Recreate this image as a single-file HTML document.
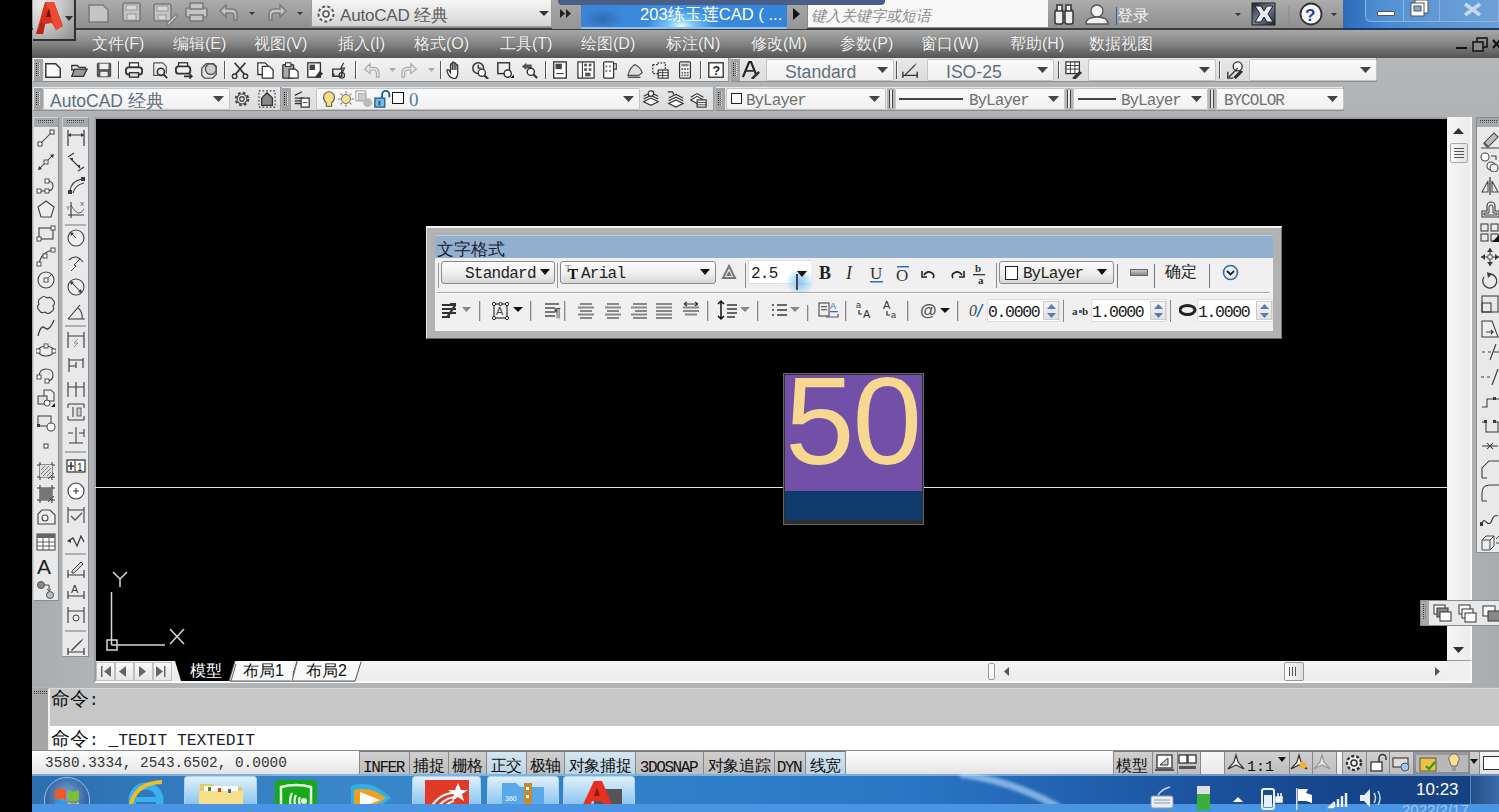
<!DOCTYPE html>
<html><head><meta charset="utf-8">
<style>
*{margin:0;padding:0;box-sizing:border-box}
html,body{width:1499px;height:812px;overflow:hidden;background:#000;font-family:"Liberation Sans",sans-serif;position:relative}
.a{position:absolute}
svg{display:block}
.mono{font-family:"Liberation Mono",monospace}
</style></head><body>
<div class="a" style="left:32px;top:0;width:1467px;height:812px;background:#b0b4b7"></div>
<!-- TITLE BAR -->
<div class="a" style="left:32px;top:0;width:1467px;height:30px;background:linear-gradient(#acacac,#979797 70%,#8e8e8e);border-bottom:2px solid #3c3c3c"></div>
<!-- A logo -->
<div class="a" style="left:33px;top:0;width:43px;height:41px;background:radial-gradient(ellipse at 20% 10%,#e8e8e8 0%,#c8c8c8 45%,#8e8e8e 100%);border-right:2px solid #303030;border-bottom:2px solid #303030;z-index:3">
<svg width="43" height="41" style="position:absolute;left:0;top:0">
<polygon points="3,34 12,2 21,2 30,26 23,30 19,23 12,24 10,34" fill="#d8301e"/><polygon points="12,2 21,2 30,26 23,30" fill="#ee4a32"/><polygon points="3,34 10,34 12,24 8,22" fill="#b82414"/><polygon points="13,17 16,8 18,17" fill="#6a140c"/>
<polygon points="32,16 40,16 36,21" fill="#333"/>
</svg></div>
<!-- quick access -->
<svg class="a" style="left:80px;top:0" width="230" height="29">
<g fill="#c4c4c4" stroke="#7c7c7c" stroke-width="1.6">
<path d="M9,5 h14 l5,5 v12 h-19 z"/>
<rect x="43" y="3" width="17" height="18" rx="2"/>
<rect x="74" y="4" width="17" height="17" rx="2"/>
<rect x="106" y="8" width="21" height="9" rx="2"/>
<rect x="110" y="3" width="13" height="6"/>
<rect x="110" y="15" width="13" height="6"/>
<path d="M140,11 l6,-6 v4 h6 q5,0 5,6 v5 h-3 v-4 q0,-3 -3,-3 h-5 v4 z"/>
<path d="M206,11 l-6,-6 v4 h-6 q-5,0 -5,6 v5 h3 v-4 q0,-3 3,-3 h5 v4 z"/>
</g>
<g fill="#d6d6d6" stroke="#8a8a8a" stroke-width="0.8"><rect x="46" y="5" width="11" height="5"/><rect x="47" y="14" width="9" height="6"/><rect x="77" y="6" width="11" height="5"/><rect x="78" y="15" width="8" height="5"/></g><path d="M87,23 l9,-9 l2,2 l-9,9 h-2z" fill="#c8c8c8" stroke="#7a7a7a" stroke-width="1.2"/>
<polygon points="169,12 175,12 172,15" fill="#333"/>
<polygon points="217,12 223,12 220,15" fill="#333"/>
</svg>
<!-- workspace combo -->
<div class="a" style="left:311px;top:0;width:241px;height:27px;background:linear-gradient(#f6f6f6,#e6e6e6 50%,#d4d4d4);border:1px solid #9a9a9a;border-top:none"></div>
<svg class="a" style="left:314px;top:2px" width="24" height="24"><circle cx="12" cy="12" r="7.5" fill="#eee" stroke="#555" stroke-width="2" stroke-dasharray="3 2.2"/><circle cx="12" cy="12" r="3" fill="none" stroke="#555" stroke-width="1.6"/></svg>
<div class="a" style="left:340px;top:4px;font-size:17px;color:#5a5a5a;letter-spacing:-0.2px">AutoCAD 经典</div>
<svg class="a" style="left:539px;top:10px" width="12" height="8"><polygon points="0,1 10,1 5,6" fill="#333"/></svg>
<div class="a" style="left:552px;top:0;width:29px;height:29px;background:linear-gradient(#a8a8a8,#959595)"></div>
<svg class="a" style="left:560px;top:9px" width="14" height="10"><polygon points="0,0 5,4.5 0,9" fill="#222"/><polygon points="6,0 11,4.5 6,9" fill="#222"/></svg>
<!-- blue title -->
<div class="a" style="left:581px;top:5px;width:206px;height:24px;background:radial-gradient(ellipse 34px 18px at 100px 21px,rgba(235,252,255,1) 0%,rgba(130,215,255,.75) 40%,transparent 100%),radial-gradient(ellipse 20px 10px at 22px 14px,rgba(40,90,160,.6) 0%,transparent 100%),linear-gradient(90deg,#3a84d4,#3a8ee4 50%,#3484d8)"></div>
<div class="a" style="left:581px;top:27px;width:206px;height:2px;background:#8fc0f0"></div>
<div class="a" style="left:640px;top:5px;font-size:16.6px;line-height:20px;color:#fff;white-space:nowrap">203练玉莲CAD ( ...</div>
<div class="a" style="left:787px;top:0;width:20px;height:29px;background:linear-gradient(#a8a8a8,#959595)"></div>
<svg class="a" style="left:792px;top:8px" width="10" height="12"><polygon points="1,0 8,6 1,12" fill="#111"/></svg>
<!-- search -->
<div class="a" style="left:807px;top:0;width:241px;height:27px;background:#f8f8f8;border-left:1px solid #888"></div>
<div class="a" style="left:811px;top:6px;font-size:15px;line-height:20px;color:#8a8a8a;font-style:italic;white-space:nowrap">键入关键字或短语</div>
<!-- right tools -->
<svg class="a" style="left:1052px;top:2px" width="300" height="26">
<g fill="#f0f0f0" stroke="#333" stroke-width="1.5">
<rect x="3" y="8" width="8" height="14" rx="2"/><rect x="13" y="8" width="8" height="14" rx="2"/>
<rect x="5" y="3" width="5" height="6"/><rect x="14" y="3" width="5" height="6"/>
</g>
<g fill="#f4f4f4" stroke="#555" stroke-width="1.3"><circle cx="45" cy="9" r="6"/><path d="M34,22 q0,-7 11,-7 q11,0 11,7 z"/></g>
<rect x="64" y="5" width="1" height="18" fill="#3a5ab0"/>
<text x="65" y="19" font-size="16" fill="#f4f4f4" font-family="Liberation Sans">登录</text>
<polygon points="183,11 189,11 186,14" fill="#333"/>
<defs><linearGradient id="xg" x1="0" y1="0" x2="1" y2="1"><stop offset="0" stop-color="#1c2230"/><stop offset=".5" stop-color="#7a8090"/><stop offset="1" stop-color="#1c2230"/></linearGradient></defs>
<rect x="200" y="1" width="23" height="22" fill="url(#xg)" stroke="#222" stroke-width="1"/>
<path d="M203,4 l6,0 l3,5 l3,-5 l6,0 l-5,8 l5,8 l-6,0 l-3,-5 l-3,5 l-6,0 l5,-8 z" fill="#e8ecf0" stroke="#1a2030" stroke-width="1"/>
<line x1="237" y1="3" x2="237" y2="24" stroke="#888" stroke-width="1"/>
<circle cx="259" cy="12" r="10.5" fill="#f8f8f8" stroke="#333" stroke-width="1.8"/>
<text x="253" y="18.5" font-size="17" font-weight="bold" fill="#2040a8" font-family="Liberation Sans">?</text>
<polygon points="279,11 285,11 282,14" fill="#333"/>
</svg>
<!-- window buttons -->
<div class="a" style="left:1343px;top:0;width:156px;height:30px;background:linear-gradient(90deg,#2d6cb8,#4a8ad0 30%,#5b94d0 60%,#6a9ed6);border-bottom:2px solid #1a3a6a"></div>
<div class="a" style="left:1365px;top:0;width:134px;height:22px;border:1px solid #8ab4e4;border-top:none;border-radius:0 0 0 6px;background:rgba(120,170,225,.25)"></div>
<div class="a" style="left:1403px;top:0;width:1px;height:21px;background:#8ab4e4"></div>
<div class="a" style="left:1439px;top:0;width:1px;height:21px;background:#8ab4e4"></div>
<div class="a" style="left:1377px;top:11px;width:18px;height:5px;background:#fff;border:1px solid #555;border-radius:1px"></div>
<svg class="a" style="left:1409px;top:0" width="24" height="20"><rect x="6" y="0" width="13" height="13" fill="#fff" stroke="#555"/><rect x="2" y="3" width="13" height="13" fill="#fff" stroke="#555"/><rect x="5" y="6" width="7" height="5" fill="#7aa8d8" stroke="#555"/></svg>
<svg class="a" style="left:1462px;top:2px" width="22" height="16"><path d="M3,2 L18,13 M18,2 L3,13" stroke="#c4d8ee" stroke-width="3.6"/></svg>
<div class="a" style="left:558px;top:0;width:327px;height:5px;background:#4a5e86;border-radius:0 0 4px 4px"></div>
<!-- MENU -->
<div class="a" style="left:32px;top:30px;width:1467px;height:28px;background:linear-gradient(#a8a8a8,#8c8c8c 40%,#545454)"></div>
<div class="a" style="left:92px;top:34px;font-size:16px;line-height:20px;color:#f2f2f2;white-space:nowrap;text-shadow:0 0 1px #555">文件(F)</div>
<div class="a" style="left:173px;top:34px;font-size:16px;line-height:20px;color:#f2f2f2;white-space:nowrap;text-shadow:0 0 1px #555">编辑(E)</div>
<div class="a" style="left:254px;top:34px;font-size:16px;line-height:20px;color:#f2f2f2;white-space:nowrap;text-shadow:0 0 1px #555">视图(V)</div>
<div class="a" style="left:338px;top:34px;font-size:16px;line-height:20px;color:#f2f2f2;white-space:nowrap;text-shadow:0 0 1px #555">插入(I)</div>
<div class="a" style="left:414px;top:34px;font-size:16px;line-height:20px;color:#f2f2f2;white-space:nowrap;text-shadow:0 0 1px #555">格式(O)</div>
<div class="a" style="left:500px;top:34px;font-size:16px;line-height:20px;color:#f2f2f2;white-space:nowrap;text-shadow:0 0 1px #555">工具(T)</div>
<div class="a" style="left:581px;top:34px;font-size:16px;line-height:20px;color:#f2f2f2;white-space:nowrap;text-shadow:0 0 1px #555">绘图(D)</div>
<div class="a" style="left:666px;top:34px;font-size:16px;line-height:20px;color:#f2f2f2;white-space:nowrap;text-shadow:0 0 1px #555">标注(N)</div>
<div class="a" style="left:751px;top:34px;font-size:16px;line-height:20px;color:#f2f2f2;white-space:nowrap;text-shadow:0 0 1px #555">修改(M)</div>
<div class="a" style="left:840px;top:34px;font-size:16px;line-height:20px;color:#f2f2f2;white-space:nowrap;text-shadow:0 0 1px #555">参数(P)</div>
<div class="a" style="left:921px;top:34px;font-size:16px;line-height:20px;color:#f2f2f2;white-space:nowrap;text-shadow:0 0 1px #555">窗口(W)</div>
<div class="a" style="left:1010px;top:34px;font-size:16px;line-height:20px;color:#f2f2f2;white-space:nowrap;text-shadow:0 0 1px #555">帮助(H)</div>
<div class="a" style="left:1089px;top:34px;font-size:16px;line-height:20px;color:#f2f2f2;white-space:nowrap;text-shadow:0 0 1px #555">数据视图</div>
<svg class="a" style="left:1453px;top:36px" width="46" height="18">
<rect x="3" y="11" width="11" height="2" fill="#111"/>
<rect x="24" y="2" width="10" height="9" fill="none" stroke="#111" stroke-width="1.5"/><rect x="20" y="6" width="10" height="9" fill="#8a8a8a" stroke="#111" stroke-width="1.5"/>
<path d="M40,4 l7,8 M47,4 l-7,8" stroke="#111" stroke-width="2"/>
</svg>
<!-- TOOLBARS -->
<div class="a" style="left:32px;top:58px;width:1467px;height:60px;background:linear-gradient(#b3b7ba,#afb3b6)"></div>
<div class="a" style="left:33px;top:58px;width:696px;height:24px;background:linear-gradient(#f2f2f2,#e6e6e6);border-bottom:1px solid #8e8e8e;border-right:1px solid #9a9a9a"></div>
<div class="a" style="left:34px;top:59px;width:9px;height:22px;background:#a2a4a6"></div>
<div class="a" style="left:36px;top:63px;width:1px;height:14px;background:repeating-linear-gradient(#222 0 1px,transparent 1px 2px)"></div>
<div class="a" style="left:38px;top:63px;width:1px;height:14px;background:repeating-linear-gradient(#666 0 1px,transparent 1px 2px)"></div>
<div class="a" style="left:39px;top:63px;width:1px;height:14px;background:repeating-linear-gradient(#eee 0 1px,transparent 1px 2px)"></div>
<div class="a" style="left:731px;top:58px;width:646px;height:24px;background:linear-gradient(#e8e8e8,#dcdcdc);border-bottom:1px solid #8e8e8e;border-right:1px solid #9a9a9a"></div>
<div class="a" style="left:731px;top:59px;width:9px;height:22px;background:#a2a4a6"></div>
<div class="a" style="left:733px;top:63px;width:1px;height:14px;background:repeating-linear-gradient(#222 0 1px,transparent 1px 2px)"></div>
<div class="a" style="left:735px;top:63px;width:1px;height:14px;background:repeating-linear-gradient(#666 0 1px,transparent 1px 2px)"></div>
<div class="a" style="left:736px;top:63px;width:1px;height:14px;background:repeating-linear-gradient(#eee 0 1px,transparent 1px 2px)"></div>
<div class="a" style="left:118px;top:61px;width:2px;height:18px;background:#555;border-right:1px solid #fff"></div>
<div class="a" style="left:224px;top:61px;width:2px;height:18px;background:#555;border-right:1px solid #fff"></div>
<div class="a" style="left:355px;top:61px;width:2px;height:18px;background:#555;border-right:1px solid #fff"></div>
<div class="a" style="left:440px;top:61px;width:2px;height:18px;background:#555;border-right:1px solid #fff"></div>
<div class="a" style="left:545px;top:61px;width:2px;height:18px;background:#555;border-right:1px solid #fff"></div>
<div class="a" style="left:700px;top:61px;width:2px;height:18px;background:#555;border-right:1px solid #fff"></div>
<div class="a" style="left:33px;top:87px;width:248px;height:24px;background:linear-gradient(#e8e8e8,#dcdcdc);border-bottom:1px solid #8e8e8e;border-right:1px solid #9a9a9a"></div>
<div class="a" style="left:34px;top:88px;width:9px;height:22px;background:#a2a4a6"></div>
<div class="a" style="left:36px;top:92px;width:1px;height:14px;background:repeating-linear-gradient(#222 0 1px,transparent 1px 2px)"></div>
<div class="a" style="left:38px;top:92px;width:1px;height:14px;background:repeating-linear-gradient(#666 0 1px,transparent 1px 2px)"></div>
<div class="a" style="left:39px;top:92px;width:1px;height:14px;background:repeating-linear-gradient(#eee 0 1px,transparent 1px 2px)"></div>
<div class="a" style="left:43px;top:88px;width:187px;height:22px;background:linear-gradient(#fafafa,#f0f0f0);border:1px solid #c4c4c4;border-radius:2px"></div>
<div class="a" style="left:50px;top:92px;height:18px;line-height:18px;font-family:'Liberation Sans',sans-serif;font-size:17.5px;color:#5f6f80;white-space:nowrap;">AutoCAD 经典</div>
<svg class="a" style="left:213px;top:96px" width="12" height="7"><polygon points="0,0 11,0 5.5,6" fill="#444"/></svg>
<div class="a" style="left:282px;top:87px;width:432px;height:24px;background:linear-gradient(#e8e8e8,#dcdcdc);border-bottom:1px solid #8e8e8e;border-right:1px solid #9a9a9a"></div>
<div class="a" style="left:282px;top:88px;width:9px;height:22px;background:#a2a4a6"></div>
<div class="a" style="left:284px;top:92px;width:1px;height:14px;background:repeating-linear-gradient(#222 0 1px,transparent 1px 2px)"></div>
<div class="a" style="left:286px;top:92px;width:1px;height:14px;background:repeating-linear-gradient(#666 0 1px,transparent 1px 2px)"></div>
<div class="a" style="left:287px;top:92px;width:1px;height:14px;background:repeating-linear-gradient(#eee 0 1px,transparent 1px 2px)"></div>
<div class="a" style="left:316px;top:88px;width:324px;height:22px;background:linear-gradient(#fafafa,#f0f0f0);border:1px solid #c4c4c4;border-radius:2px"></div>
<svg class="a" style="left:623px;top:96px" width="12" height="7"><polygon points="0,0 11,0 5.5,6" fill="#444"/></svg>
<div class="a" style="left:409px;top:89px;font-size:19px;line-height:22px;color:#5a7aa0;font-family:'Liberation Serif',serif">0</div>
<div class="a" style="left:716px;top:87px;width:628px;height:24px;background:linear-gradient(#e8e8e8,#dcdcdc);border-bottom:1px solid #8e8e8e;border-right:1px solid #9a9a9a"></div>
<div class="a" style="left:716px;top:88px;width:9px;height:22px;background:#a2a4a6"></div>
<div class="a" style="left:718px;top:92px;width:1px;height:14px;background:repeating-linear-gradient(#222 0 1px,transparent 1px 2px)"></div>
<div class="a" style="left:720px;top:92px;width:1px;height:14px;background:repeating-linear-gradient(#666 0 1px,transparent 1px 2px)"></div>
<div class="a" style="left:721px;top:92px;width:1px;height:14px;background:repeating-linear-gradient(#eee 0 1px,transparent 1px 2px)"></div>
<div class="a" style="left:726px;top:88px;width:160px;height:22px;background:linear-gradient(#fafafa,#f0f0f0);border:1px solid #c4c4c4;border-radius:2px"></div>
<div class="a" style="left:731px;top:93px;width:11px;height:11px;border:1.5px solid #222;background:#fff"></div>
<div class="a" style="left:746px;top:92px;height:18px;line-height:18px;font-family:'Liberation Mono',monospace;font-size:16px;color:#707070;white-space:nowrap;letter-spacing:-1.05px">ByLayer</div>
<svg class="a" style="left:869px;top:96px" width="12" height="7"><polygon points="0,0 11,0 5.5,6" fill="#444"/></svg>
<div class="a" style="left:887px;top:88px;width:8px;height:22px;background:#b8b8b8"></div>
<div class="a" style="left:889px;top:90px;width:4px;height:18px;border-left:1px solid #444;border-right:1px solid #444;background:#e8e8e8"></div>
<div class="a" style="left:895px;top:88px;width:170px;height:22px;background:linear-gradient(#fafafa,#f0f0f0);border:1px solid #c4c4c4;border-radius:2px"></div>
<div class="a" style="left:899px;top:98px;width:64px;height:2px;background:#444"></div>
<div class="a" style="left:969px;top:92px;height:18px;line-height:18px;font-family:'Liberation Mono',monospace;font-size:16px;color:#707070;white-space:nowrap;letter-spacing:-1.05px">ByLayer</div>
<svg class="a" style="left:1048px;top:96px" width="12" height="7"><polygon points="0,0 11,0 5.5,6" fill="#444"/></svg>
<div class="a" style="left:1065px;top:88px;width:8px;height:22px;background:#b8b8b8"></div>
<div class="a" style="left:1067px;top:90px;width:4px;height:18px;border-left:1px solid #444;border-right:1px solid #444;background:#e8e8e8"></div>
<div class="a" style="left:1073px;top:88px;width:135px;height:22px;background:linear-gradient(#fafafa,#f0f0f0);border:1px solid #c4c4c4;border-radius:2px"></div>
<div class="a" style="left:1078px;top:98px;width:38px;height:2px;background:#444"></div>
<div class="a" style="left:1121px;top:92px;height:18px;line-height:18px;font-family:'Liberation Mono',monospace;font-size:16px;color:#707070;white-space:nowrap;letter-spacing:-1.05px">ByLayer</div>
<svg class="a" style="left:1191px;top:96px" width="12" height="7"><polygon points="0,0 11,0 5.5,6" fill="#444"/></svg>
<div class="a" style="left:1208px;top:88px;width:8px;height:22px;background:#b8b8b8"></div>
<div class="a" style="left:1210px;top:90px;width:4px;height:18px;border-left:1px solid #444;border-right:1px solid #444;background:#e8e8e8"></div>
<div class="a" style="left:1216px;top:88px;width:128px;height:22px;background:linear-gradient(#fafafa,#f0f0f0);border:1px solid #c4c4c4;border-radius:2px"></div>
<div class="a" style="left:1224px;top:92px;height:18px;line-height:18px;font-family:'Liberation Mono',monospace;font-size:16px;color:#707070;white-space:nowrap;letter-spacing:-1.05px">BYCOLOR</div>
<svg class="a" style="left:1327px;top:96px" width="12" height="7"><polygon points="0,0 11,0 5.5,6" fill="#444"/></svg>
<div class="a" style="left:766px;top:59px;width:128px;height:22px;background:linear-gradient(#fafafa,#f0f0f0);border:1px solid #c4c4c4;border-radius:2px"></div>
<div class="a" style="left:785px;top:63px;height:18px;line-height:18px;font-family:'Liberation Sans',sans-serif;font-size:17.6px;color:#5f6f80;white-space:nowrap;">Standard</div>
<svg class="a" style="left:877px;top:67px" width="12" height="7"><polygon points="0,0 11,0 5.5,6" fill="#444"/></svg>
<div class="a" style="left:896px;top:61px;width:2px;height:18px;background:#555;border-right:1px solid #fff"></div>
<div class="a" style="left:927px;top:59px;width:127px;height:22px;background:linear-gradient(#fafafa,#f0f0f0);border:1px solid #c4c4c4;border-radius:2px"></div>
<div class="a" style="left:946px;top:63px;height:18px;line-height:18px;font-family:'Liberation Sans',sans-serif;font-size:17.6px;color:#5f6f80;white-space:nowrap;">ISO-25</div>
<svg class="a" style="left:1037px;top:67px" width="12" height="7"><polygon points="0,0 11,0 5.5,6" fill="#444"/></svg>
<div class="a" style="left:1058px;top:61px;width:2px;height:18px;background:#555;border-right:1px solid #fff"></div>
<div class="a" style="left:1088px;top:59px;width:128px;height:22px;background:linear-gradient(#fafafa,#f0f0f0);border:1px solid #c4c4c4;border-radius:2px"></div>
<svg class="a" style="left:1199px;top:67px" width="12" height="7"><polygon points="0,0 11,0 5.5,6" fill="#444"/></svg>
<div class="a" style="left:1219px;top:61px;width:2px;height:18px;background:#555;border-right:1px solid #fff"></div>
<div class="a" style="left:1249px;top:59px;width:128px;height:22px;background:linear-gradient(#fafafa,#f0f0f0);border:1px solid #c4c4c4;border-radius:2px"></div>
<svg class="a" style="left:1360px;top:67px" width="12" height="7"><polygon points="0,0 11,0 5.5,6" fill="#444"/></svg>
<svg class="a" style="left:44px;top:61px" width="18" height="18" viewBox="0 0 20.00 20.00"><path d="M2,3 h11 l5,5 v10 h-16 z" stroke="#333" stroke-width="1.6" fill="#fafafa"/></svg>
<svg class="a" style="left:70px;top:61px" width="18" height="18" viewBox="0 0 20.00 20.00"><path d="M2,5 h6 l2,2 h7 v3 h-15 z" stroke="#333" stroke-width="1.4" fill="#eee"/><path d="M2,17 l3,-8 h14 l-4,8 z" stroke="#333" stroke-width="1.4" fill="#999"/></svg>
<svg class="a" style="left:95px;top:61px" width="18" height="18" viewBox="0 0 20.00 20.00"><rect x="2" y="2" width="16" height="16" rx="1.5" fill="#555"/><rect x="5" y="3" width="10" height="6" fill="#f0f0f0"/><rect x="6" y="12" width="8" height="5" fill="#f0f0f0"/></svg>
<svg class="a" style="left:125px;top:61px" width="18" height="18" viewBox="0 0 20.00 20.00"><rect x="5" y="2" width="10" height="5" stroke="#333" stroke-width="1.5" fill="#fff"/><rect x="1" y="7" width="18" height="8" rx="3" stroke="#333" stroke-width="2" fill="#eee"/><rect x="5" y="13" width="10" height="5" stroke="#333" stroke-width="1.5" fill="#ddd"/></svg>
<svg class="a" style="left:151px;top:61px" width="18" height="18" viewBox="0 0 20.00 20.00"><path d="M3,2 h10 l4,4 v8" stroke="#555" stroke-width="1.3" fill="none"/><path d="M3,2 v14 h5" stroke="#555" stroke-width="1.3" fill="none"/><circle cx="11" cy="12" r="4" stroke="#333" stroke-width="1.8" fill="none"/><path d="M14,15 l4,4" stroke="#333" stroke-width="2.2" fill="none"/></svg>
<svg class="a" style="left:175px;top:61px" width="18" height="18" viewBox="0 0 20.00 20.00"><rect x="4" y="2" width="10" height="5" stroke="#333" stroke-width="1.5" fill="#fff"/><rect x="1" y="6" width="16" height="8" rx="3" stroke="#333" stroke-width="2" fill="#eee"/><path d="M10,16 h6 v-3 l4,4 l-4,4 v-3 h-6z" fill="#333"/></svg>
<svg class="a" style="left:200px;top:61px" width="18" height="18" viewBox="0 0 20.00 20.00"><path d="M2,8 l5,-5 h8 l3,3 v9 l-4,4 h-9 l-3,-3 z" stroke="#555" stroke-width="1.5" fill="#e8e8e8"/><circle cx="12" cy="9" r="6" stroke="#555" stroke-width="1.5" fill="#ccc"/></svg>
<svg class="a" style="left:231px;top:61px" width="18" height="18" viewBox="0 0 20.00 20.00"><path d="M4,2 l12,14 M16,2 l-12,14" stroke="#333" stroke-width="1.8" fill="none"/><circle cx="4" cy="17" r="2.5" stroke="#333" stroke-width="1.6" fill="#fff"/><circle cx="16" cy="17" r="2.5" stroke="#333" stroke-width="1.6" fill="#fff"/></svg>
<svg class="a" style="left:256px;top:61px" width="18" height="18" viewBox="0 0 20.00 20.00"><path d="M2,2 h8 l3,3 v10 h-11 z" stroke="#333" stroke-width="1.4" fill="#fff"/><path d="M7,6 h8 l4,4 v9 h-12 z" stroke="#333" stroke-width="1.4" fill="#fff"/></svg>
<svg class="a" style="left:281px;top:61px" width="18" height="18" viewBox="0 0 20.00 20.00"><rect x="2" y="4" width="12" height="15" rx="1" stroke="#333" stroke-width="1.5" fill="#aaa"/><rect x="5" y="2" width="6" height="4" stroke="#333" stroke-width="1.2" fill="#fff"/><path d="M9,9 h7 l3,3 v7 h-10 z" stroke="#333" stroke-width="1.4" fill="#fff"/></svg>
<svg class="a" style="left:306px;top:61px" width="18" height="18" viewBox="0 0 20.00 20.00"><rect x="2" y="2" width="14" height="16" stroke="#333" stroke-width="1.5" fill="#fff"/><rect x="4" y="4" width="6" height="6" fill="#444"/><path d="M10,18 l5,-7 l4,3 l-5,5z" fill="#333"/></svg>
<svg class="a" style="left:331px;top:61px" width="18" height="18" viewBox="0 0 20.00 20.00"><path d="M2,9 h10 v8 h-10 z" stroke="#333" stroke-width="1.6" fill="none"/><circle cx="12" cy="16" r="3" stroke="#333" stroke-width="1.3" fill="none"/><path d="M14,2 l-3,6 h4 l-3,6" stroke="#333" stroke-width="1.3" fill="none"/><path d="M1,15 h3" stroke="#333" stroke-width="2" fill="none"/></svg>
<svg class="a" style="left:362px;top:61px" width="18" height="18" viewBox="0 0 20.00 20.00"><path d="M3,9 l6,-6 v4 h4 q6,0 6,7 v4 h-3 v-4 q0,-4 -3,-4 h-4 v4 z" stroke="#aaa" stroke-width="1.3" fill="#e6e6e6"/></svg>
<svg class="a" style="left:401px;top:61px" width="18" height="18" viewBox="0 0 20.00 20.00"><path d="M17,9 l-6,-6 v4 h-4 q-6,0 -6,7 v4 h3 v-4 q0,-4 3,-4 h4 v4 z" stroke="#aaa" stroke-width="1.3" fill="#e6e6e6"/></svg>
<svg class="a" style="left:446px;top:61px" width="18" height="18" viewBox="0 0 20.00 20.00"><path d="M5,18 q-3,-3 -4,-7 q0,-2 2,-1 l2,3 v-9 q1,-2 2,0 v6 v-8 q1,-2 2,0 v8 v-7 q1,-2 2,0 v7 v-5 q1,-2 2,0 v9 q0,4 -3,6 z" stroke="#333" stroke-width="1.4" fill="#fff"/></svg>
<svg class="a" style="left:471px;top:61px" width="18" height="18" viewBox="0 0 20.00 20.00"><circle cx="8" cy="8" r="6" stroke="#333" stroke-width="1.6" fill="none"/><path d="M8,4 v4 h3" stroke="#333" stroke-width="1.4" fill="none"/><circle cx="12" cy="13" r="4" stroke="#333" stroke-width="1.6" fill="#fff"/><path d="M15,16 l4,4" stroke="#333" stroke-width="2.4" fill="none"/></svg>
<svg class="a" style="left:496px;top:61px" width="18" height="18" viewBox="0 0 20.00 20.00"><rect x="2" y="2" width="13" height="12" stroke="#333" stroke-width="1.6" fill="none"/><circle cx="13" cy="14" r="4" stroke="#333" stroke-width="1.6" fill="#fff"/><path d="M16,19 h4 v-4z" fill="#111"/></svg>
<svg class="a" style="left:520px;top:61px" width="18" height="18" viewBox="0 0 20.00 20.00"><path d="M2,6 l5,-4 v2 h6 v4 h-6 v2z" fill="#555"/><circle cx="12" cy="12" r="4" stroke="#333" stroke-width="1.6" fill="#fff"/><path d="M15,15 l4,4" stroke="#333" stroke-width="2.4" fill="none"/></svg>
<svg class="a" style="left:551px;top:61px" width="18" height="18" viewBox="0 0 20.00 20.00"><rect x="3" y="1" width="14" height="18" stroke="#333" stroke-width="1.5" fill="#fff"/><rect x="5" y="3" width="7" height="6" fill="#444"/><path d="M6,14 h8" stroke="#333" stroke-width="1.2" fill="none"/></svg>
<svg class="a" style="left:577px;top:61px" width="18" height="18" viewBox="0 0 20.00 20.00"><rect x="1" y="1" width="18" height="18" stroke="#333" stroke-width="1.4" fill="#fff"/><path d="M6,1 v18" stroke="#333" stroke-width="1.2" fill="none"/><g fill="#555"><rect x="8" y="3" width="3" height="3"/><rect x="13" y="3" width="3" height="3"/><rect x="8" y="8" width="3" height="3"/><rect x="13" y="8" width="3" height="3"/><rect x="9" y="13" width="6" height="4"/></g></svg>
<svg class="a" style="left:601px;top:61px" width="18" height="18" viewBox="0 0 20.00 20.00"><rect x="3" y="1" width="11" height="18" rx="1" stroke="#333" stroke-width="1.4" fill="#fff"/><path d="M14,3 h3 v6 h-3" stroke="#333" stroke-width="1.2" fill="none"/><g fill="#777"><rect x="5" y="5" width="2" height="2"/><rect x="9" y="5" width="2" height="2"/><rect x="5" y="10" width="2" height="2"/><rect x="9" y="10" width="2" height="2"/></g></svg>
<svg class="a" style="left:626px;top:61px" width="18" height="18" viewBox="0 0 20.00 20.00"><path d="M2,16 q3,-10 8,-12 q6,3 8,9 l-4,3 z" stroke="#555" stroke-width="1.3" fill="#ddd"/><path d="M2,18 h14" stroke="#333" stroke-width="1.4" fill="none"/></svg>
<svg class="a" style="left:651px;top:61px" width="18" height="18" viewBox="0 0 20.00 20.00"><path d="M2,4 h6 v-2 h8 v8 M2,4 v10 h6" stroke="#333" stroke-width="1.4" fill="none" stroke-dasharray="2 1.5"/><rect x="8" y="10" width="11" height="9" stroke="#333" stroke-width="1.3" fill="#fff"/><path d="M8,13 h11 M8,16 h11 M13,10 v9" stroke="#333" stroke-width="1" fill="none"/></svg>
<svg class="a" style="left:676px;top:61px" width="18" height="18" viewBox="0 0 20.00 20.00"><rect x="4" y="1" width="12" height="18" rx="1" stroke="#333" stroke-width="1.4" fill="#fff"/><rect x="6" y="3" width="8" height="3" fill="#888"/><g fill="#666"><rect x="6" y="8" width="2" height="2"/><rect x="9" y="8" width="2" height="2"/><rect x="12" y="8" width="2" height="2"/><rect x="6" y="12" width="2" height="2"/><rect x="9" y="12" width="2" height="2"/><rect x="12" y="12" width="2" height="2"/><rect x="6" y="15" width="2" height="2"/><rect x="9" y="15" width="2" height="2"/><rect x="12" y="15" width="2" height="2"/></g></svg>
<svg class="a" style="left:707px;top:61px" width="18" height="18" viewBox="0 0 20.00 20.00"><rect x="2" y="2" width="16" height="16" stroke="#333" stroke-width="1.5" fill="#fff"/><text x="6" y="16" font-size="14" font-weight="bold" fill="#222" font-family="Liberation Sans">?</text></svg>
<svg class="a" style="left:742px;top:61px" width="18" height="18" viewBox="0 0 20.00 20.00"><path d="M1,18 l7,-17 h2 l6,15" stroke="#222" stroke-width="2.4" fill="none"/><path d="M4,11 h9" stroke="#333" stroke-width="2" fill="none"/><path d="M10,19 l8,-8 l2,2 l-8,8z" fill="#333"/></svg>
<svg class="a" style="left:901px;top:61px" width="18" height="18" viewBox="0 0 20.00 20.00"><path d="M2,12 v7 M18,12 v7 M2,16 h16" stroke="#333" stroke-width="1.5" fill="none"/><path d="M4,15 l10,-10 l4,-3 l-3,4 l-10,10z" fill="#444"/></svg>
<svg class="a" style="left:1065px;top:61px" width="18" height="18" viewBox="0 0 20.00 20.00"><rect x="1" y="1" width="15" height="13" stroke="#333" stroke-width="1.4" fill="#fff"/><path d="M1,5 h15 M1,9 h15 M6,1 v13 M11,1 v13" stroke="#333" stroke-width="1" fill="none"/><path d="M8,19 l8,-8 l3,2 l-8,8z" fill="#333"/></svg>
<svg class="a" style="left:1226px;top:61px" width="18" height="18" viewBox="0 0 20.00 20.00"><circle cx="13" cy="6" r="5" stroke="#333" stroke-width="1.5" fill="#fff"/><path d="M13,8 l-10,10" stroke="#333" stroke-width="1.5" fill="none"/><path d="M2,12 v7 h6" stroke="#333" stroke-width="1.5" fill="none"/><path d="M8,18 l8,-8 l3,2 l-8,8z" fill="#333"/></svg>
<svg class="a" style="left:389px;top:68px" width="8" height="5"><polygon points="0,0 7,0 3.5,4" fill="#aaa"/></svg>
<svg class="a" style="left:428px;top:68px" width="8" height="5"><polygon points="0,0 7,0 3.5,4" fill="#aaa"/></svg>
<svg class="a" style="left:233px;top:90px" width="18" height="18" viewBox="0 0 20.00 20.00"><circle cx="10" cy="10" r="7" fill="#eee" stroke="#444" stroke-width="2.2" stroke-dasharray="3 2.5"/><circle cx="10" cy="10" r="5.5" stroke="#444" stroke-width="1.2" fill="#eee"/><circle cx="10" cy="10" r="2.5" stroke="#444" stroke-width="1.4" fill="none"/></svg>
<svg class="a" style="left:258px;top:90px" width="18" height="18" viewBox="0 0 20.00 20.00"><rect x="1" y="1" width="18" height="18" stroke="#444" stroke-width="1.2" fill="none" stroke-dasharray="2 2"/><path d="M4,9 l6,-6 l6,6 v8 h-12z" stroke="#333" stroke-width="1.4" fill="#888"/></svg>
<svg class="a" style="left:293px;top:90px" width="18" height="18" viewBox="0 0 20.00 20.00"><path d="M2,6 l8,-4 M2,9 h10 M2,12 h8 M2,15 h8" stroke="#333" stroke-width="1.4" fill="none"/><rect x="9" y="9" width="9" height="10" stroke="#333" stroke-width="1.4" fill="#fff"/><path d="M11,14 h5" stroke="#333" stroke-width="1" fill="none"/></svg>
<svg class="a" style="left:320px;top:90px" width="18" height="18" viewBox="0 0 20.00 20.00"><path d="M4,8 a6,6 0 1 1 12,0 q0,4 -3,6 v4 h-6 v-4 q-3,-2 -3,-6z" fill="#f8e080" stroke="#555" stroke-width="1.2"/></svg>
<svg class="a" style="left:337px;top:90px" width="18" height="18" viewBox="0 0 20.00 20.00"><circle cx="10" cy="10" r="5" fill="#f6e08a" stroke="#666" stroke-width="1"/><path d="M10,1 v3 M10,16 v3 M1,10 h3 M16,10 h3 M4,4 l2,2 M14,14 l2,2 M4,16 l2,-2 M14,6 l2,-2" stroke="#777" stroke-width="1.2"/></svg>
<svg class="a" style="left:355px;top:90px" width="18" height="18" viewBox="0 0 20.00 20.00"><rect x="1" y="1" width="11" height="11" fill="none" stroke="#aaa" stroke-width="1.3"/><rect x="4" y="4" width="8" height="8" fill="#ccc" stroke="#aaa"/><circle cx="14" cy="14" r="4.5" fill="#bbb" stroke="#aaa" stroke-dasharray="2 1.5"/></svg>
<svg class="a" style="left:374px;top:90px" width="18" height="18" viewBox="0 0 20.00 20.00"><rect x="1" y="9" width="11" height="10" fill="#7ab8e0" stroke="#1a5a90" stroke-width="1.4"/><path d="M9,9 v-4 a4,4 0 0 1 8,0 v3" fill="none" stroke="#1a5a90" stroke-width="2"/><rect x="5" y="12" width="2" height="5" fill="#1a5a90"/></svg>
<svg class="a" style="left:641px;top:90px" width="18" height="18" viewBox="0 0 20.00 20.00"><path d="M3,13 l8,-4 l8,4 l-8,4z M3,10 l8,-4 l8,4 M3,7 l8,-4 l8,4" fill="#fff" stroke="#333" stroke-width="1.3"/><circle cx="11" cy="4" r="3" fill="#fff" stroke="#333" stroke-width="1.3"/></svg>
<svg class="a" style="left:666px;top:90px" width="18" height="18" viewBox="0 0 20.00 20.00"><path d="M3,15 l8,-4 l8,4 l-8,4z M3,12 l8,-4 l8,4 M3,9 l8,-4 l8,4" fill="#fff" stroke="#333" stroke-width="1.3"/><path d="M2,2 h5 l2,3" fill="none" stroke="#333" stroke-width="1.4"/></svg>
<svg class="a" style="left:689px;top:90px" width="18" height="18" viewBox="0 0 20.00 20.00"><path d="M2,11 l7,-4 l7,4 l-7,4z M2,8 l7,-4 l7,4" fill="#fff" stroke="#333" stroke-width="1.3"/><rect x="9" y="11" width="10" height="8" fill="#fff" stroke="#333" stroke-width="1.3"/><path d="M9,14 h10 M9,16.5 h10" stroke="#333" stroke-width="1"/></svg>
<div class="a" style="left:392px;top:92px;width:12px;height:12px;border:1.5px solid #111;background:#fff"></div>
<!-- LEFT -->
<div class="a" style="left:32px;top:117px;width:63px;height:570px;background:linear-gradient(90deg,#a9acaf,#b2b5b8)"></div>
<div class="a" style="left:33px;top:117px;width:26px;height:484px;background:#e9e9e9;border:1px solid #8c8c8c;border-left-color:#d0d0d0;border-top-color:#d0d0d0"></div>
<div class="a" style="left:34px;top:118px;width:24px;height:9px;background:#a6a8aa"></div>
<div class="a" style="left:38px;top:120px;width:16px;height:1px;background:repeating-linear-gradient(90deg,#333 0 1px,transparent 1px 2px)"></div>
<div class="a" style="left:38px;top:122px;width:16px;height:1px;background:repeating-linear-gradient(90deg,#666 0 1px,transparent 1px 2px)"></div>
<div class="a" style="left:62px;top:117px;width:27px;height:540px;background:#e9e9e9;border:1px solid #8c8c8c;border-left-color:#d0d0d0;border-top-color:#d0d0d0"></div>
<div class="a" style="left:63px;top:118px;width:25px;height:9px;background:#a6a8aa"></div>
<div class="a" style="left:67px;top:120px;width:17px;height:1px;background:repeating-linear-gradient(90deg,#333 0 1px,transparent 1px 2px)"></div>
<div class="a" style="left:67px;top:122px;width:17px;height:1px;background:repeating-linear-gradient(90deg,#666 0 1px,transparent 1px 2px)"></div>
<svg class="a" style="left:36px;top:128px" width="20" height="20" viewBox="0 0 20 20"><path d="M4,16 L16,4" stroke="#3a3a3a" stroke-width="1.04" fill="none"/><rect x="2" y="14" width="4" height="4" stroke="#3a3a3a" stroke-width="0.96" fill="#fff"/><rect x="14" y="2" width="4" height="4" stroke="#3a3a3a" stroke-width="0.96" fill="#fff"/></svg>
<svg class="a" style="left:36px;top:152px" width="20" height="20" viewBox="0 0 20 20"><path d="M3,17 L17,3" stroke="#3a3a3a" stroke-width="1.04" fill="none"/><path d="M2,18 l4,-1 l-3,-3z M18,2 l-4,1 l3,3z" fill="#3a3a3a"/><rect x="8" y="8" width="4" height="4" stroke="#3a3a3a" stroke-width="0.88" fill="#fff"/></svg>
<svg class="a" style="left:36px;top:176px" width="20" height="20" viewBox="0 0 20 20"><path d="M3,15 h8 q6,0 6,-5 q0,-5 -6,-5" stroke="#3a3a3a" stroke-width="1.04" fill="none"/><rect x="1" y="13" width="4" height="4" stroke="#3a3a3a" stroke-width="0.88" fill="#fff"/><rect x="9" y="13" width="4" height="4" stroke="#3a3a3a" stroke-width="0.88" fill="#fff"/><rect x="9" y="3" width="4" height="4" stroke="#3a3a3a" stroke-width="0.88" fill="#fff"/></svg>
<svg class="a" style="left:36px;top:199px" width="20" height="20" viewBox="0 0 20 20"><path d="M10,2 L18,8 L15,18 H5 L2,8 Z" stroke="#444" stroke-width="1.12" fill="#eee"/></svg>
<svg class="a" style="left:36px;top:223px" width="20" height="20" viewBox="0 0 20 20"><rect x="3" y="5" width="14" height="11" stroke="#444" stroke-width="1.12" fill="#e8e8e8"/><rect x="1" y="14" width="4" height="4" stroke="#3a3a3a" stroke-width="0.88" fill="#fff"/><rect x="15" y="3" width="4" height="4" stroke="#3a3a3a" stroke-width="0.88" fill="#fff"/></svg>
<svg class="a" style="left:36px;top:247px" width="20" height="20" viewBox="0 0 20 20"><path d="M3,17 Q5,5 17,3" stroke="#3a3a3a" stroke-width="1.04" fill="none"/><rect x="1" y="15" width="4" height="4" stroke="#3a3a3a" stroke-width="0.88" fill="#fff"/><rect x="7" y="7" width="4" height="4" stroke="#3a3a3a" stroke-width="0.88" fill="#fff"/><rect x="15" y="1" width="4" height="4" stroke="#3a3a3a" stroke-width="0.88" fill="#fff"/></svg>
<svg class="a" style="left:36px;top:270px" width="20" height="20" viewBox="0 0 20 20"><circle cx="10" cy="10" r="8" stroke="#444" stroke-width="1.12" fill="#eee"/><path d="M10,10 l6,-6" stroke="#3a3a3a" stroke-width="0.88" fill="none"/><rect x="8" y="8" width="4" height="4" stroke="#3a3a3a" stroke-width="0.88" fill="#fff"/></svg>
<svg class="a" style="left:36px;top:294px" width="20" height="20" viewBox="0 0 20 20"><path d="M5,4 q3,-3 6,0 q4,-2 6,2 q3,3 0,6 q2,4 -2,6 q-3,3 -6,0 q-4,2 -6,-2 q-3,-3 0,-6 q-2,-4 2,-6z" stroke="#444" stroke-width="1.12" fill="#e8e8e8"/></svg>
<svg class="a" style="left:36px;top:318px" width="20" height="20" viewBox="0 0 20 20"><path d="M2,18 Q5,6 9,10 Q13,14 18,2" stroke="#444" stroke-width="1.28" fill="none"/></svg>
<svg class="a" style="left:36px;top:341px" width="20" height="20" viewBox="0 0 20 20"><ellipse cx="10" cy="10" rx="8" ry="5" stroke="#444" stroke-width="1.12" fill="#eee"/><rect x="8" y="3" width="4" height="4" stroke="#3a3a3a" stroke-width="0.88" fill="#fff"/><rect x="0" y="8" width="4" height="4" stroke="#3a3a3a" stroke-width="0.88" fill="#fff"/><rect x="16" y="8" width="4" height="4" stroke="#3a3a3a" stroke-width="0.88" fill="#fff"/></svg>
<svg class="a" style="left:36px;top:365px" width="20" height="20" viewBox="0 0 20 20"><path d="M3,12 Q3,4 10,4 Q17,4 17,10 Q17,16 11,16" stroke="#444" stroke-width="1.12" fill="none"/><rect x="1" y="10" width="4" height="4" stroke="#3a3a3a" stroke-width="0.88" fill="#fff"/><rect x="9" y="14" width="4" height="4" stroke="#3a3a3a" stroke-width="0.88" fill="#fff"/></svg>
<svg class="a" style="left:36px;top:388px" width="20" height="20" viewBox="0 0 20 20"><path d="M8,2 h7 l3,3 v8 h-10z" stroke="#444" stroke-width="1.04" fill="#eee"/><rect x="2" y="8" width="9" height="8" stroke="#444" stroke-width="1.04" fill="#e0e0e0"/><circle cx="11" cy="15" r="3" stroke="#444" stroke-width="0.96" fill="#fff"/><path d="M15,19 h4 v-4z" fill="#111"/></svg>
<svg class="a" style="left:36px;top:413px" width="20" height="20" viewBox="0 0 20 20"><rect x="2" y="3" width="13" height="10" stroke="#444" stroke-width="1.04" fill="#e8e8e8"/><circle cx="15" cy="14" r="4" stroke="#444" stroke-width="1.04" fill="#fff"/><rect x="1" y="11" width="3" height="3" fill="#3a3a3a"/></svg>
<svg class="a" style="left:36px;top:436px" width="20" height="20" viewBox="0 0 20 20"><rect x="8" y="8" width="4" height="4" stroke="#3a3a3a" stroke-width="0.96" fill="#fff"/></svg>
<svg class="a" style="left:36px;top:461px" width="20" height="20" viewBox="0 0 20 20"><path d="M1,4 h18 M1,16 h18 M4,1 v18 M16,1 v18" stroke="#3a3a3a" stroke-width="1.04" fill="none"/><rect x="4" y="4" width="12" height="12" fill="#ddd"/><path d="M5,9 l4,-4 M5,13 l8,-8 M7,15 l8,-8 M11,15 l4,-4" stroke="#555" stroke-width="0.72" fill="none"/><path d="M12,18 l6,-6" stroke="#3a3a3a" stroke-width="0.96" fill="none"/></svg>
<svg class="a" style="left:36px;top:484px" width="20" height="20" viewBox="0 0 20 20"><path d="M1,4 h18 M1,16 h18 M4,1 v18 M16,1 v18" stroke="#3a3a3a" stroke-width="1.04" fill="none"/><rect x="4" y="4" width="12" height="12" fill="#777"/><path d="M12,18 l6,-6" stroke="#3a3a3a" stroke-width="0.96" fill="none"/></svg>
<svg class="a" style="left:36px;top:508px" width="20" height="20" viewBox="0 0 20 20"><path d="M2,6 l4,-4 h8 l5,5 v9 h-17z" stroke="#444" stroke-width="1.12" fill="#eee"/><circle cx="9" cy="10" r="3" stroke="#444" stroke-width="1.04" fill="#fff"/></svg>
<svg class="a" style="left:36px;top:532px" width="20" height="20" viewBox="0 0 20 20"><rect x="1" y="2" width="18" height="16" stroke="#444" stroke-width="1.04" fill="#fff"/><rect x="1" y="2" width="18" height="4" fill="#666"/><path d="M1,10 h18 M1,14 h18 M7,6 v12 M13,6 v12" stroke="#3a3a3a" stroke-width="0.80" fill="none"/></svg>
<svg class="a" style="left:36px;top:556px" width="20" height="20" viewBox="0 0 20 20"><text x="1" y="18" font-size="21" fill="#222" font-family="Liberation Sans">A</text></svg>
<svg class="a" style="left:36px;top:580px" width="20" height="20" viewBox="0 0 20 20"><circle cx="5" cy="5" r="3.5" fill="#888" stroke="#555"/><circle cx="14" cy="15" r="3.5" fill="#bbb" stroke="#555"/><path d="M9,5 h4 v5" stroke="#3a3a3a" stroke-width="0.96" fill="none"/><path d="M11,9 l2,2 l2,-2" stroke="#3a3a3a" stroke-width="0.80" fill="none"/></svg>
<svg class="a" style="left:66px;top:128px" width="20" height="20" viewBox="0 0 20 20"><path d="M2,2 v16 M18,2 v16 M2,7 h16" stroke="#3a3a3a" stroke-width="1.20" fill="none"/><path d="M2,7 l3,-2 v4z M18,7 l-3,-2 v4z" fill="#3a3a3a"/></svg>
<svg class="a" style="left:66px;top:152px" width="20" height="20" viewBox="0 0 20 20"><path d="M2,5 l6,-4 M12,19 l6,-4 M4,6 l10,10" stroke="#3a3a3a" stroke-width="1.12" fill="none"/><rect x="5" y="6" width="2" height="2" fill="#3a3a3a"/><rect x="12" y="13" width="2" height="2" fill="#3a3a3a"/></svg>
<svg class="a" style="left:66px;top:176px" width="20" height="20" viewBox="0 0 20 20"><path d="M4,15 Q5,5 16,3" stroke="#3a3a3a" stroke-width="1.12" fill="none"/><path d="M7,17 Q9,9 18,7" stroke="#3a3a3a" stroke-width="1.12" fill="none"/><rect x="2" y="14" width="4" height="4" fill="#3a3a3a"/><rect x="15" y="1" width="4" height="4" fill="#3a3a3a"/></svg>
<svg class="a" style="left:66px;top:200px" width="20" height="20" viewBox="0 0 20 20"><path d="M5,18 v-16 M2,15 h16" stroke="#3a3a3a" stroke-width="1.12" fill="none"/><path d="M5,5 q4,8 8,8 q3,0 5,-4" stroke="#555" stroke-width="0.88" fill="none"/><text x="0" y="10" font-size="6" fill="#3a3a3a">Y</text><text x="14" y="6" font-size="6" fill="#3a3a3a">X</text></svg>
<svg class="a" style="left:66px;top:228px" width="20" height="20" viewBox="0 0 20 20"><circle cx="10" cy="10" r="8" stroke="#444" stroke-width="1.12" fill="#eee"/><path d="M10,10 l-5,-5" stroke="#3a3a3a" stroke-width="0.96" fill="none"/><path d="M4,4 l4,1 l-3,3z" fill="#3a3a3a"/></svg>
<svg class="a" style="left:66px;top:254px" width="20" height="20" viewBox="0 0 20 20"><path d="M3,6 Q10,-1 17,8" stroke="#3a3a3a" stroke-width="1.12" fill="none"/><path d="M5,17 l5,-5 l-2,-1 l6,-6" stroke="#3a3a3a" stroke-width="0.96" fill="none"/></svg>
<svg class="a" style="left:66px;top:277px" width="20" height="20" viewBox="0 0 20 20"><circle cx="10" cy="10" r="8" stroke="#444" stroke-width="1.12" fill="#eee"/><path d="M5,5 l10,10" stroke="#3a3a3a" stroke-width="1.04" fill="none"/><path d="M4,4 l4,1 l-3,3z M16,16 l-4,-1 l3,-3z" fill="#3a3a3a"/></svg>
<svg class="a" style="left:66px;top:301px" width="20" height="20" viewBox="0 0 20 20"><path d="M2,18 h17 M2,18 l12,-14" stroke="#3a3a3a" stroke-width="1.12" fill="none"/><path d="M12,7 Q17,11 16,18" stroke="#3a3a3a" stroke-width="1.04" fill="none"/></svg>
<svg class="a" style="left:66px;top:330px" width="20" height="20" viewBox="0 0 20 20"><path d="M2,2 v16 M18,2 v16 M2,6 h16" stroke="#3a3a3a" stroke-width="1.12" fill="none"/><path d="M12,9 l-4,4 h4 l-4,4" stroke="#777" stroke-width="0.80" fill="none"/></svg>
<svg class="a" style="left:66px;top:354px" width="20" height="20" viewBox="0 0 20 20"><path d="M3,4 v14 M10,8 v6 M17,4 v10 M3,6 h14 M3,12 h7" stroke="#3a3a3a" stroke-width="1.12" fill="none"/></svg>
<svg class="a" style="left:66px;top:379px" width="20" height="20" viewBox="0 0 20 20"><path d="M2,3 v15 M10,3 v15 M18,3 v15 M2,8 h16" stroke="#3a3a3a" stroke-width="1.12" fill="none"/></svg>
<svg class="a" style="left:66px;top:402px" width="20" height="20" viewBox="0 0 20 20"><path d="M2,2 h16 M2,18 h16 M2,2 v4 M18,2 v4 M2,14 v4 M18,14 v4" stroke="#3a3a3a" stroke-width="1.04" fill="none"/><rect x="11" y="6" width="4" height="8" stroke="#444" stroke-width="0.80" fill="#ccc"/><path d="M7,5 v10" stroke="#3a3a3a" stroke-width="1.04" fill="none"/></svg>
<svg class="a" style="left:66px;top:425px" width="20" height="20" viewBox="0 0 20 20"><path d="M10,2 v16 M3,18 h14 M2,8 h5 M13,8 h5 M18,4 v8" stroke="#3a3a3a" stroke-width="1.04" fill="none"/></svg>
<svg class="a" style="left:66px;top:456px" width="20" height="20" viewBox="0 0 20 20"><rect x="1" y="4" width="18" height="12" stroke="#222" stroke-width="1.12" fill="#fff"/><path d="M9,4 v12" stroke="#3a3a3a" stroke-width="1.04" fill="none"/><path d="M2,10 h6 M5,6 v8" stroke="#3a3a3a" stroke-width="1.60" fill="none"/><text x="11" y="15" font-size="10" fill="#222">1</text></svg>
<svg class="a" style="left:66px;top:481px" width="20" height="20" viewBox="0 0 20 20"><circle cx="10" cy="10" r="8" stroke="#3a3a3a" stroke-width="1.12" fill="#fff"/><path d="M10,7 v6 M7,10 h6" stroke="#3a3a3a" stroke-width="1.12" fill="none"/></svg>
<svg class="a" style="left:66px;top:505px" width="20" height="20" viewBox="0 0 20 20"><path d="M2,2 v16 M18,2 v16 M2,5 h16" stroke="#3a3a3a" stroke-width="1.04" fill="none"/><path d="M5,11 l4,4 l7,-7" stroke="#555" stroke-width="1.28" fill="none"/></svg>
<svg class="a" style="left:66px;top:529px" width="20" height="20" viewBox="0 0 20 20"><path d="M2,12 l5,-3 l4,8 l4,-10 l3,6" stroke="#3a3a3a" stroke-width="1.28" fill="none"/><path d="M1,12 l4,-2 v4z" fill="#3a3a3a"/></svg>
<svg class="a" style="left:66px;top:560px" width="20" height="20" viewBox="0 0 20 20"><path d="M2,10 v8 M18,10 v8 M2,15 h16" stroke="#3a3a3a" stroke-width="1.12" fill="none"/><path d="M6,11 l9,-9 l2,2 l-9,9 h-2z" stroke="#3a3a3a" stroke-width="0.96" fill="#ddd"/></svg>
<svg class="a" style="left:66px;top:581px" width="20" height="20" viewBox="0 0 20 20"><path d="M2,10 v8 M18,10 v8 M2,15 h16" stroke="#3a3a3a" stroke-width="1.12" fill="none"/><text x="5" y="12" font-size="11" fill="#3a3a3a">A</text></svg>
<svg class="a" style="left:66px;top:605px" width="20" height="20" viewBox="0 0 20 20"><path d="M2,2 v16 M18,2 v16 M2,6 h16" stroke="#3a3a3a" stroke-width="1.12" fill="none"/><path d="M7,13 a3,3 0 1 1 6,0 a3,3 0 1 1 -6,0" stroke="#3a3a3a" stroke-width="0.96" fill="none"/></svg>
<svg class="a" style="left:66px;top:636px" width="20" height="20" viewBox="0 0 20 20"><path d="M2,12 v7 M18,12 v7 M2,16 h16" stroke="#3a3a3a" stroke-width="1.20" fill="none"/><path d="M5,14 l9,-9 l4,-3 l-3,4 l-9,9z" fill="#444"/></svg>
<div class="a" style="left:65px;top:224px;width:21px;height:2px;background:#b0b0b0"></div>
<div class="a" style="left:65px;top:325px;width:21px;height:2px;background:#b0b0b0"></div>
<div class="a" style="left:65px;top:451px;width:21px;height:2px;background:#b0b0b0"></div>
<div class="a" style="left:65px;top:553px;width:21px;height:2px;background:#b0b0b0"></div>
<div class="a" style="left:65px;top:630px;width:21px;height:2px;background:#b0b0b0"></div>
<div class="a" style="left:94px;top:117px;width:1353px;height:544px;background:#000;border-left:2px solid #9c9ea2;border-top:2px solid #9c9ea2"></div>
<!-- RIGHT -->
<div class="a" style="left:1447px;top:117px;width:52px;height:570px;background:linear-gradient(90deg,#b0b3b6,#a9acaf)"></div>
<div class="a" style="left:1447px;top:117px;width:25px;height:544px;background:linear-gradient(90deg,#f6f6f6,#ececec);border-right:2px solid #fafafa;border-bottom:1px solid #9a9a9a"></div>
<svg class="a" style="left:1453px;top:127px" width="12" height="8"><polygon points="0,7 11,7 5.5,1" fill="#333"/></svg>
<div class="a" style="left:1450px;top:143px;width:18px;height:20px;background:linear-gradient(90deg,#fafafa,#e2e2e2);border:1px solid #aaa;border-radius:2px"></div>
<div class="a" style="left:1454px;top:148px;width:10px;height:10px;background:repeating-linear-gradient(#555 0 1px,transparent 1px 3px)"></div>
<svg class="a" style="left:1453px;top:646px" width="12" height="8"><polygon points="0,1 11,1 5.5,7" fill="#333"/></svg>
<div class="a" style="left:1476px;top:117px;width:23px;height:436px;background:#e9e9e9;border:1px solid #8c8c8c;border-right:none"></div>
<div class="a" style="left:1477px;top:118px;width:22px;height:9px;background:#a6a8aa"></div>
<div class="a" style="left:1480px;top:120px;width:18px;height:1px;background:repeating-linear-gradient(90deg,#333 0 1px,transparent 1px 2px)"></div>
<div class="a" style="left:1480px;top:122px;width:18px;height:1px;background:repeating-linear-gradient(90deg,#666 0 1px,transparent 1px 2px)"></div>
<svg class="a" style="left:1480px;top:129px" width="20" height="20" viewBox="0 0 20 20"><path d="M4,14 l10,-10 l4,4 l-10,10z" stroke="#3a3a3a" stroke-width="1.04" fill="#bbb"/><path d="M4,14 l4,4" stroke="#555" stroke-width="2.40" fill="none"/><path d="M1,19 h18" stroke="#3a3a3a" stroke-width="0.96" fill="none"/></svg>
<svg class="a" style="left:1480px;top:152px" width="20" height="20" viewBox="0 0 20 20"><circle cx="5" cy="5" r="4" stroke="#444" stroke-width="1.04" fill="#fff"/><circle cx="11" cy="14" r="4" stroke="#444" stroke-width="1.04" fill="#fff"/><circle cx="14" cy="16" r="4" stroke="#444" stroke-width="1.04" fill="#eee"/><path d="M11,4 h5 v4" stroke="#3a3a3a" stroke-width="1.04" fill="none"/></svg>
<svg class="a" style="left:1480px;top:176px" width="20" height="20" viewBox="0 0 20 20"><path d="M10,1 v18" stroke="#3a3a3a" stroke-width="1.28" fill="none"/><path d="M8,5 L2,16 H8z M12,5 L18,16 H12z" stroke="#444" stroke-width="1.04" fill="#eee"/></svg>
<svg class="a" style="left:1480px;top:200px" width="20" height="20" viewBox="0 0 20 20"><path d="M2,17 v-6 h5 v-5 a4,4 0 0 1 8,0 v5 h4 v6z" stroke="#3a3a3a" stroke-width="1.12" fill="none"/><path d="M4,15 v-2 h5 v-6 a2,2 0 0 1 4,0 v6 h4 v2z" stroke="#3a3a3a" stroke-width="0.96" fill="none"/></svg>
<svg class="a" style="left:1480px;top:223px" width="20" height="20" viewBox="0 0 20 20"><rect x="1" y="1" width="7" height="7" stroke="#3a3a3a" stroke-width="1.04" fill="none"/><rect x="11" y="1" width="7" height="7" stroke="#3a3a3a" stroke-width="1.04" fill="none"/><rect x="1" y="11" width="7" height="7" stroke="#3a3a3a" stroke-width="1.04" fill="none"/><rect x="11" y="11" width="7" height="7" stroke="#3a3a3a" stroke-width="1.04" fill="none"/><path d="M19,12 v7 h-7z" fill="#111"/></svg>
<svg class="a" style="left:1480px;top:247px" width="20" height="20" viewBox="0 0 20 20"><path d="M10,1 v18 M1,10 h18" stroke="#3a3a3a" stroke-width="1.04" fill="none"/><path d="M10,1 l-3,4 h6z M10,19 l-3,-4 h6z M1,10 l4,-3 v6z M19,10 l-4,-3 v6z" fill="#3a3a3a"/><rect x="8" y="8" width="4" height="4" stroke="#3a3a3a" stroke-width="0.80" fill="#fff"/></svg>
<svg class="a" style="left:1480px;top:271px" width="20" height="20" viewBox="0 0 20 20"><path d="M10,3 A7,7 0 1 1 4,6" stroke="#3a3a3a" stroke-width="1.28" fill="none"/><path d="M7,1 l5,2 l-4,4z" fill="#3a3a3a"/></svg>
<svg class="a" style="left:1480px;top:294px" width="20" height="20" viewBox="0 0 20 20"><rect x="2" y="2" width="16" height="16" stroke="#3a3a3a" stroke-width="1.04" fill="none"/><rect x="2" y="9" width="9" height="9" stroke="#3a3a3a" stroke-width="1.04" fill="none"/></svg>
<svg class="a" style="left:1480px;top:319px" width="20" height="20" viewBox="0 0 20 20"><path d="M2,2 h10 l6,16 h-16z" stroke="#3a3a3a" stroke-width="1.04" fill="#eee"/><path d="M6,13 h7 M11,11 l2,2 l-2,2" stroke="#3a3a3a" stroke-width="1.12" fill="none"/></svg>
<svg class="a" style="left:1480px;top:342px" width="20" height="20" viewBox="0 0 20 20"><path d="M2,10 h3 M8,10 h3 M14,10 h5" stroke="#3a3a3a" stroke-width="0.96" fill="none"/><path d="M10,18 L16,2" stroke="#3a3a3a" stroke-width="1.12" fill="none"/></svg>
<svg class="a" style="left:1480px;top:367px" width="20" height="20" viewBox="0 0 20 20"><path d="M1,10 h3 M7,10 h3" stroke="#3a3a3a" stroke-width="0.96" fill="none"/><path d="M12,18 L18,2" stroke="#3a3a3a" stroke-width="1.12" fill="none"/></svg>
<svg class="a" style="left:1480px;top:390px" width="20" height="20" viewBox="0 0 20 20"><path d="M2,17 h5 v-8 h12" stroke="#3a3a3a" stroke-width="1.04" fill="none"/><rect x="13" y="7" width="3" height="3" fill="#3a3a3a"/></svg>
<svg class="a" style="left:1480px;top:414px" width="20" height="20" viewBox="0 0 20 20"><path d="M2,8 h4 v10 h12 v-10 h-4" stroke="#3a3a3a" stroke-width="1.04" fill="none"/><rect x="4" y="6" width="3" height="3" fill="#3a3a3a"/><rect x="13" y="6" width="3" height="3" fill="#3a3a3a"/></svg>
<svg class="a" style="left:1480px;top:436px" width="20" height="20" viewBox="0 0 20 20"><path d="M2,10 h16" stroke="#3a3a3a" stroke-width="1.04" fill="none"/><path d="M7,7 l3,3 l-3,3 M13,7 l-3,3 l3,3" stroke="#3a3a3a" stroke-width="1.04" fill="none"/></svg>
<svg class="a" style="left:1480px;top:460px" width="20" height="20" viewBox="0 0 20 20"><path d="M2,18 v-10 l7,-7 h10 M2,18 h5" stroke="#3a3a3a" stroke-width="1.04" fill="none"/></svg>
<svg class="a" style="left:1480px;top:483px" width="20" height="20" viewBox="0 0 20 20"><path d="M2,18 v-8 q0,-8 8,-8 h9 M2,18 h5" stroke="#3a3a3a" stroke-width="1.04" fill="none"/></svg>
<svg class="a" style="left:1480px;top:508px" width="20" height="20" viewBox="0 0 20 20"><path d="M1,18 q2,-8 5,-4 q4,4 6,-2 q2,-6 6,-4" stroke="#3a3a3a" stroke-width="1.20" fill="none"/><rect x="0" y="14" width="3" height="4" fill="#3a3a3a"/></svg>
<svg class="a" style="left:1480px;top:531px" width="20" height="20" viewBox="0 0 20 20"><path d="M2,9 l4,-4 h8 v10 l-4,4 h-8z M2,9 h8 v10 M10,9 l4,-4" stroke="#444" stroke-width="0.96" fill="#eee"/><path d="M16,8 l3,-3 M16,12 h3" stroke="#3a3a3a" stroke-width="0.96" fill="none"/></svg>
<div class="a" style="left:1420px;top:600px;width:79px;height:26px;background:#e9e9e9;border:1px solid #8c8c8c;border-right:none"></div>
<div class="a" style="left:1421px;top:601px;width:8px;height:24px;background:#a6a8aa"></div>
<div class="a" style="left:1423px;top:604px;width:1px;height:16px;background:repeating-linear-gradient(#333 0 1px,transparent 1px 2px)"></div>
<div class="a" style="left:1425px;top:604px;width:1px;height:16px;background:repeating-linear-gradient(#777 0 1px,transparent 1px 2px)"></div>
<svg class="a" style="left:1432px;top:603px" width="20" height="20" viewBox="0 0 20 20"><rect x="2" y="2" width="11" height="9" stroke="#3a3a3a" stroke-width="1.04" fill="#fff"/><rect x="5" y="5" width="11" height="9" stroke="#3a3a3a" stroke-width="1.04" fill="#888"/><rect x="8" y="9" width="11" height="9" stroke="#3a3a3a" stroke-width="1.04" fill="#fff"/></svg>
<svg class="a" style="left:1457px;top:603px" width="20" height="20" viewBox="0 0 20 20"><rect x="2" y="2" width="11" height="9" stroke="#3a3a3a" stroke-width="1.04" fill="#fff"/><rect x="5" y="6" width="11" height="9" stroke="#3a3a3a" stroke-width="1.04" fill="#fff"/><rect x="8" y="10" width="11" height="9" stroke="#3a3a3a" stroke-width="1.04" fill="#fff"/></svg>
<svg class="a" style="left:1481px;top:603px" width="20" height="20" viewBox="0 0 20 20"><rect x="2" y="3" width="12" height="10" stroke="#3a3a3a" stroke-width="1.04" fill="#fff"/><rect x="7" y="8" width="12" height="10" stroke="#3a3a3a" stroke-width="1.04" fill="#888"/></svg>
<!-- DRAWING -->
<div class="a" style="left:95px;top:487px;width:1352px;height:1px;background:#e0e0e0"></div>
<svg class="a" style="left:95px;top:560px" width="100" height="101">
<g stroke="#d8d8d8" stroke-width="1.5" fill="none">
<path d="M16.5,32 V85 M16.5,85 H70"/>
<rect x="12" y="80" width="10" height="10"/>
<path d="M18,12 L25,19 L32,12 M25,19 V27"/>
<path d="M75,69 L89,84 M89,69 L75,84"/>
</g></svg>
<!-- block 50 -->
<div class="a" style="left:783px;top:373px;width:141px;height:152px;background:#2e2e2e;border:1px solid #666"></div>
<div class="a" style="left:785px;top:375px;width:137px;height:116px;background:#7250a8"></div>
<div class="a" style="left:785px;top:491px;width:137px;height:29px;background:#0e3a6c"></div>
<div class="a" style="left:785px;top:346px;width:145px;font-size:125px;line-height:150px;color:#f6d890;letter-spacing:-2px;white-space:nowrap">50</div>
<!-- DIALOG -->
<div class="a" style="left:426px;top:226px;width:856px;height:113px;background:#b2b2b2;border-top:2px solid #f4f4f4;border-left:1px solid #e8e8e8;border-right:1px solid #777;border-bottom:1px solid #666"></div>
<div class="a" style="left:435px;top:235px;width:838px;height:96px;background:#f0f0f0"></div>
<div class="a" style="left:435px;top:235px;width:838px;height:23px;background:#94b0d0;border-top:1px solid #b8cce0"></div>
<div class="a" style="left:437px;top:239px;font-size:17px;line-height:21px;color:#1a2230;white-space:nowrap">文字格式</div>
<div class="a" style="left:438px;top:263px;width:1px;height:25px;background:#999"></div>
<div class="a" style="left:441px;top:261px;width:114px;height:23px;background:linear-gradient(#fdfdfd,#f0f0f0 50%,#d8d8d8);border:1px solid #8a8a8a;border-radius:3px"></div>
<div class="a" style="left:465px;top:264px;font-family:'Liberation Mono',monospace;font-size:16px;line-height:20px;color:#222;white-space:nowrap;letter-spacing:-0.75px">Standard</div>
<svg class="a" style="left:540px;top:269px" width="10" height="6"><polygon points="0,0 10,0 5.0,6" fill="#111"/></svg>
<div class="a" style="left:557px;top:263px;width:1px;height:25px;background:#999"></div>
<div class="a" style="left:560px;top:261px;width:156px;height:23px;background:linear-gradient(#fdfdfd,#f0f0f0 50%,#d8d8d8);border:1px solid #8a8a8a;border-radius:3px"></div>
<svg class="a" style="left:565px;top:263px" width="18" height="18"><text x="0" y="9" font-size="10" fill="#888" font-family="Liberation Serif">T</text><text x="3" y="16" font-size="15" font-weight="bold" fill="#111" font-family="Liberation Serif">T</text></svg>
<div class="a" style="left:581px;top:264px;font-family:'Liberation Mono',monospace;font-size:16px;line-height:20px;color:#222;white-space:nowrap;letter-spacing:-0.75px">Arial</div>
<svg class="a" style="left:700px;top:269px" width="10" height="6"><polygon points="0,0 10,0 5.0,6" fill="#111"/></svg>
<svg class="a" style="left:721px;top:264px" width="16" height="16"><path d="M8,2 L14,14 H2 Z" fill="none" stroke="#777" stroke-width="2"/><path d="M8,7 L11,12 H5Z" fill="#777"/></svg>
<div class="a" style="left:745px;top:263px;width:1px;height:25px;background:#888"></div>
<div class="a" style="left:748px;top:260px;width:63px;height:24px;background:#fff;border:1px solid #e0e0e0;border-right:none"></div>
<div class="a" style="left:751px;top:264px;font-family:'Liberation Mono',monospace;font-size:16px;line-height:20px;color:#222;white-space:nowrap;letter-spacing:-0.75px">2.5</div>
<div class="a" style="left:786px;top:268px;width:28px;height:28px;border-radius:50%;background:radial-gradient(circle,rgba(110,180,235,.75) 0%,rgba(150,205,245,.45) 45%,transparent 72%)"></div>
<div class="a" style="left:796px;top:274px;width:2px;height:16px;background:#3a4a5a"></div>
<svg class="a" style="left:797px;top:271px" width="10" height="6"><polygon points="0,0 10,0 5.0,6" fill="#111"/></svg>
<svg class="a" style="left:818px;top:262px" width="170" height="24"><text x="1" y="17" font-size="18" font-weight="bold" fill="#222" font-family="Liberation Serif">B</text><text x="28" y="17" font-size="18" font-style="italic" fill="#333" font-family="Liberation Serif">I</text><text x="52" y="17" font-size="17" fill="#333" font-family="Liberation Serif">U</text><rect x="52" y="19" width="13" height="1.5" fill="#2a70c0"/><text x="78" y="19" font-size="17" fill="#333" font-family="Liberation Serif">O</text><rect x="79" y="4" width="12" height="1.5" fill="#2a70c0"/><path d="M106,13 q3,-5 8,-2 q3,2 1,5" fill="none" stroke="#222" stroke-width="1.6"/><path d="M104,9 v6 h5" fill="none" stroke="#222" stroke-width="1.6"/><path d="M144,13 q-3,-5 -8,-2 q-3,2 -1,5" fill="none" stroke="#222" stroke-width="1.6"/><path d="M146,9 v6 h-5" fill="none" stroke="#222" stroke-width="1.6"/><text x="157" y="10" font-size="11" font-weight="bold" fill="#333" font-family="Liberation Serif">b</text><rect x="155" y="12" width="12" height="1.3" fill="#333"/><text x="160" y="22" font-size="11" font-weight="bold" fill="#333" font-family="Liberation Serif">a</text></svg>
<div class="a" style="left:996px;top:263px;width:1px;height:25px;background:#888"></div>
<div class="a" style="left:999px;top:261px;width:115px;height:23px;background:linear-gradient(#fdfdfd,#f0f0f0 50%,#d8d8d8);border:1px solid #8a8a8a;border-radius:3px"></div>
<div class="a" style="left:1005px;top:266px;width:13px;height:14px;border:1.5px solid #222;background:#fff"></div>
<div class="a" style="left:1023px;top:264px;font-family:'Liberation Mono',monospace;font-size:16px;line-height:20px;color:#222;white-space:nowrap;letter-spacing:-1px">ByLayer</div>
<svg class="a" style="left:1097px;top:269px" width="10" height="6"><polygon points="0,0 10,0 5.0,6" fill="#111"/></svg>
<div class="a" style="left:1117px;top:264px;width:1px;height:24px;background:#777"></div>
<div class="a" style="left:1130px;top:269px;width:18px;height:7px;background:linear-gradient(#ccc,#888);border:1px solid #666"></div>
<div class="a" style="left:1154px;top:264px;width:1px;height:24px;background:#777"></div>
<div class="a" style="left:1165px;top:262px;font-size:16px;line-height:20px;color:#222;white-space:nowrap">确定</div>
<div class="a" style="left:1209px;top:264px;width:1px;height:24px;background:#777"></div>
<svg class="a" style="left:1222px;top:264px" width="17" height="17"><circle cx="8.5" cy="8.5" r="7" fill="#e8eef6" stroke="#3a6aa8" stroke-width="1.6"/><path d="M5,7 l3.5,3.5 l3.5,-3.5" fill="none" stroke="#222" stroke-width="1.8"/></svg>
<div class="a" style="left:437px;top:292px;width:833px;height:2px;background:#a8a8a8;border-bottom:1px solid #fff"></div>
<svg class="a" style="left:432px;top:295px" width="840" height="32">
<g fill="#333">
<rect x="10" y="9" width="8" height="2"/><rect x="10" y="13" width="14" height="2"/><rect x="10" y="17" width="14" height="2"/><rect x="10" y="21" width="8" height="2"/>
<rect x="18" y="8" width="6" height="3"/><path d="M14,22 l8,-12 l2,1 l-8,12z"/>
</g>
<polygon points="30,12 39,12 34.5,17" fill="#888"/>
<rect x="47" y="6" width="1.3" height="20" fill="#888"/>
<rect x="62" y="9" width="13" height="14" fill="#f0f0f0" stroke="#333" stroke-width="1.2"/>
<circle cx="62" cy="9" r="1.6" fill="#fff" stroke="#222"/><circle cx="68.5" cy="9" r="1.6" fill="#fff" stroke="#222"/><circle cx="75" cy="9" r="1.6" fill="#fff" stroke="#222"/>
<circle cx="62" cy="23" r="1.6" fill="#fff" stroke="#222"/><circle cx="75" cy="23" r="1.6" fill="#fff" stroke="#222"/>
<text x="64" y="20" font-size="11" fill="#444" font-family="Liberation Sans">A</text>
<polygon points="81,12 91,12 86,17" fill="#111"/>
<rect x="98" y="6" width="1.3" height="20" fill="#888"/>
<g fill="#777"><rect x="113" y="8" width="14" height="2"/><rect x="113" y="12" width="10" height="2"/><rect x="113" y="16" width="10" height="2"/><rect x="113" y="20" width="10" height="2"/></g>
<text x="122" y="22" font-size="12" font-weight="bold" fill="#555" font-family="Liberation Sans">¶</text>
<rect x="132" y="6" width="1.3" height="20" fill="#888"/>
<rect x="148" y="8.0" width="12" height="2" fill="#888"/><rect x="146" y="11.5" width="16" height="2" fill="#888"/><rect x="148" y="15.0" width="12" height="2" fill="#888"/><rect x="146" y="18.5" width="16" height="2" fill="#888"/><rect x="148" y="22.0" width="12" height="2" fill="#888"/><rect x="175" y="8.0" width="12" height="2" fill="#888"/><rect x="173" y="11.5" width="16" height="2" fill="#888"/><rect x="175" y="15.0" width="12" height="2" fill="#888"/><rect x="173" y="18.5" width="16" height="2" fill="#888"/><rect x="175" y="22.0" width="12" height="2" fill="#888"/><rect x="201" y="8.0" width="14" height="2" fill="#888"/><rect x="199" y="11.5" width="16" height="2" fill="#888"/><rect x="203" y="15.0" width="12" height="2" fill="#888"/><rect x="199" y="18.5" width="16" height="2" fill="#888"/><rect x="201" y="22.0" width="14" height="2" fill="#888"/><rect x="224" y="8.0" width="16" height="2" fill="#888"/><rect x="224" y="11.5" width="16" height="2" fill="#888"/><rect x="224" y="15.0" width="16" height="2" fill="#888"/><rect x="224" y="18.5" width="16" height="2" fill="#888"/><rect x="224" y="22.0" width="16" height="2" fill="#888"/><path d="M252,9 h14 M252,9 l3,-2 M252,9 l3,2 M266,9 l-3,-2 M266,9 l-3,2" stroke="#333" stroke-width="1.2" fill="none"/><rect x="251" y="8.0" width="0" height="2" fill="#888"/><rect x="251" y="11.5" width="16" height="2" fill="#888"/><rect x="251" y="15.0" width="16" height="2" fill="#888"/><rect x="253" y="18.5" width="12" height="2" fill="#888"/>
<rect x="275" y="6" width="1.3" height="20" fill="#888"/>
<path d="M289,6 v18 M286,9 l3,-3 l3,3 M286,21 l3,3 l3,-3" stroke="#111" stroke-width="1.5" fill="none"/>
<g fill="#666"><rect x="295" y="9" width="10" height="2"/><rect x="295" y="13" width="10" height="2"/><rect x="295" y="17" width="10" height="2"/><rect x="295" y="21" width="8" height="2"/></g>
<polygon points="308,12 318,12 313,17" fill="#888"/>
<rect x="325" y="6" width="1.3" height="20" fill="#888"/>
<g fill="#666"><rect x="345" y="9" width="10" height="2"/><rect x="345" y="14" width="10" height="2"/><rect x="345" y="19" width="10" height="2"/><rect x="340" y="9" width="2" height="2"/><rect x="340" y="14" width="2" height="2"/><rect x="340" y="19" width="2" height="2"/></g>
<polygon points="358,12 368,12 363,17" fill="#888"/>
<rect x="375" y="10" width="1.3" height="16" fill="#888"/>
<rect x="387" y="8" width="10" height="13" fill="#eee" stroke="#555" stroke-width="1.2"/>
<g fill="#666"><rect x="389" y="11" width="6" height="1.3"/><rect x="389" y="14" width="6" height="1.3"/></g>
<text x="398" y="14" font-size="9" fill="#2a70c0" font-family="Liberation Sans">A</text><rect x="398" y="16" width="8" height="1.3" fill="#2a70c0"/><path d="M394,22 h12 v-3" stroke="#555" stroke-width="1.2" fill="none"/>
<rect x="413" y="6" width="1.3" height="20" fill="#888"/>
<text x="424" y="13" font-size="9" fill="#333" font-family="Liberation Sans">a</text><text x="431" y="23" font-size="11" fill="#333" font-family="Liberation Sans">A</text><path d="M427,15 v4 h3" stroke="#333" stroke-width="1.2" fill="none"/>
<text x="451" y="14" font-size="11" fill="#333" font-family="Liberation Sans">A</text><text x="459" y="23" font-size="9" fill="#333" font-family="Liberation Sans">a</text><path d="M455,16 v4 h3" stroke="#333" stroke-width="1.2" fill="none"/>
<rect x="475" y="6" width="1.3" height="20" fill="#888"/>
<text x="488" y="21" font-size="17" font-weight="bold" fill="#555" font-family="Liberation Sans">@</text>
<polygon points="508,13 518,13 513,18" fill="#111"/>
<rect x="525" y="6" width="1.3" height="20" fill="#888"/>
<text x="537" y="21" font-size="16" font-style="italic" fill="#444" font-family="Liberation Serif">0</text><path d="M545,22 l6,-13" stroke="#2a70c0" stroke-width="1.6"/>
</svg>
<div class="a" style="left:987px;top:299px;width:73px;height:23px;background:#fff;border:1px solid #ddd;border-radius:2px"></div>
<div class="a" style="left:988px;top:303px;font-family:'Liberation Mono',monospace;font-size:16.5px;line-height:20.5px;color:#222;white-space:nowrap;letter-spacing:-1.35px">0.0000</div>
<div class="a" style="left:1043px;top:301px;width:16px;height:19px;background:linear-gradient(#f4f4f4,#e0e0e0);border:1px solid #ccc"></div>
<svg class="a" style="left:1046px;top:302px" width="11" height="18"><polygon points="1,7 10,7 5.5,2" fill="#5a7ac0"/><polygon points="1,11 10,11 5.5,16" fill="#5a7ac0"/></svg>
<div class="a" style="left:1063px;top:300px;width:1px;height:22px;background:#888"></div>
<svg class="a" style="left:1072px;top:302px" width="20" height="16"><text x="0" y="13" font-size="11" font-weight="bold" fill="#333" font-family="Liberation Serif">a</text><rect x="7" y="8" width="3" height="3" fill="#2a70c0"/><text x="10" y="13" font-size="11" font-weight="bold" fill="#333" font-family="Liberation Serif">b</text></svg>
<div class="a" style="left:1091px;top:299px;width:76px;height:23px;background:#fff;border:1px solid #ddd;border-radius:2px"></div>
<div class="a" style="left:1092px;top:303px;font-family:'Liberation Mono',monospace;font-size:16.5px;line-height:20.5px;color:#222;white-space:nowrap;letter-spacing:-1.35px">1.0000</div>
<div class="a" style="left:1150px;top:301px;width:16px;height:19px;background:linear-gradient(#f4f4f4,#e0e0e0);border:1px solid #ccc"></div>
<svg class="a" style="left:1153px;top:302px" width="11" height="18"><polygon points="1,7 10,7 5.5,2" fill="#5a7ac0"/><polygon points="1,11 10,11 5.5,16" fill="#5a7ac0"/></svg>
<div class="a" style="left:1170px;top:300px;width:1px;height:22px;background:#888"></div>
<svg class="a" style="left:1179px;top:303px" width="18" height="14"><ellipse cx="8.5" cy="7" rx="7.5" ry="4.5" fill="none" stroke="#222" stroke-width="3"/></svg>
<div class="a" style="left:1197px;top:299px;width:76px;height:23px;background:#fff;border:1px solid #ddd;border-radius:2px"></div>
<div class="a" style="left:1198px;top:303px;font-family:'Liberation Mono',monospace;font-size:16.5px;line-height:20.5px;color:#222;white-space:nowrap;letter-spacing:-1.35px">1.0000</div>
<div class="a" style="left:1256px;top:301px;width:16px;height:19px;background:linear-gradient(#f4f4f4,#e0e0e0);border:1px solid #ccc"></div>
<svg class="a" style="left:1259px;top:302px" width="11" height="18"><polygon points="1,7 10,7 5.5,2" fill="#5a7ac0"/><polygon points="1,11 10,11 5.5,16" fill="#5a7ac0"/></svg>
<!-- BOTTOM -->
<div class="a" style="left:94px;top:661px;width:1353px;height:22px;background:linear-gradient(#f4f4f4,#ececec);border-bottom:2px solid #fafafa;border-left:2px solid #9c9ea2"></div>
<div class="a" style="left:1447px;top:661px;width:25px;height:22px;background:#f0f0f0;border-right:2px solid #fafafa;border-bottom:2px solid #fafafa"></div>
<div class="a" style="left:96px;top:662px;width:19px;height:19px;background:linear-gradient(#fafafa,#e6e6e6);border:1px solid #c0c0c0"></div>
<div class="a" style="left:115px;top:662px;width:19px;height:19px;background:linear-gradient(#fafafa,#e6e6e6);border:1px solid #c0c0c0"></div>
<div class="a" style="left:134px;top:662px;width:19px;height:19px;background:linear-gradient(#fafafa,#e6e6e6);border:1px solid #c0c0c0"></div>
<div class="a" style="left:153px;top:662px;width:19px;height:19px;background:linear-gradient(#fafafa,#e6e6e6);border:1px solid #c0c0c0"></div>
<svg class="a" style="left:96px;top:662px" width="80" height="19">
<rect x="5" y="4" width="1.5" height="11" fill="#666"/><polygon points="15,4 15,15 8,9.5" fill="#666"/>
<polygon points="30,4 30,15 23,9.5" fill="#666"/>
<polygon points="43,4 43,15 50,9.5" fill="#666"/>
<polygon points="60,4 60,15 67,9.5" fill="#666"/><rect x="68" y="4" width="1.5" height="11" fill="#666"/>
</svg>
<svg class="a" style="left:173px;top:661px" width="190" height="21">
<polygon points="2,0 62,0 56,20 8,20" fill="#000"/>
<path d="M62,0 L56,20 M56,20 H118 L124,0 M118,20 L121,10" fill="none" stroke="#555" stroke-width="1"/>
<path d="M118,20 H182 L188,0" fill="none" stroke="#555" stroke-width="1"/>
<polygon points="63,0 119,0 120,20 58,20" fill="#fafafa"/>
<polygon points="125,0 188,0 182,20 120,20" fill="#fafafa"/>
<path d="M63,3 L58,20 H118 M124,1 L119,20 H182 L188,1" fill="none" stroke="#666" stroke-width="1"/>
</svg>
<div class="a" style="left:190px;top:661px;font-size:16px;line-height:20px;color:#fff">模型</div>
<div class="a" style="left:243px;top:661px;font-size:16px;line-height:20px;color:#111;white-space:nowrap">布局1</div>
<div class="a" style="left:306px;top:661px;font-size:16px;line-height:20px;color:#111;white-space:nowrap">布局2</div>
<div class="a" style="left:988px;top:663px;width:7px;height:17px;border:1px solid #999;border-radius:2px;background:#f8f8f8"></div>
<svg class="a" style="left:1003px;top:667px" width="8" height="10"><polygon points="6,0 6,9 1,4.5" fill="#555"/></svg>
<svg class="a" style="left:1434px;top:667px" width="8" height="10"><polygon points="1,0 1,9 6,4.5" fill="#555"/></svg>
<div class="a" style="left:1284px;top:662px;width:20px;height:19px;background:linear-gradient(90deg,#fafafa,#e0e0e0);border:1px solid #999;border-radius:2px"></div>
<div class="a" style="left:1289px;top:667px;width:9px;height:9px;background:repeating-linear-gradient(90deg,#555 0 1.2px,transparent 1.2px 3px)"></div>
<div class="a" style="left:32px;top:688px;width:17px;height:63px;background:#a6a6a6"></div>
<div class="a" style="left:34px;top:691px;width:13px;height:1px;background:repeating-linear-gradient(90deg,#222 0 1px,transparent 1px 2px)"></div>
<div class="a" style="left:34px;top:693px;width:13px;height:1px;background:repeating-linear-gradient(90deg,#444 0 1px,transparent 1px 2px)"></div>
<div class="a" style="left:48px;top:688px;width:1451px;height:38px;background:#c7c7c7;border-left:2px solid #f0f0f0;border-top:1px solid #d8d8d8;border-radius:2px 0 0 0"></div>
<div class="a" style="left:48px;top:726px;width:1451px;height:24px;background:#fff;border-left:2px solid #f0f0f0"></div>
<div class="a" style="left:51px;top:688px;height:22px;line-height:22px;white-space:nowrap;color:#111"><span style="font-size:19px">命令</span><span style="font-family:'Liberation Mono',monospace;font-size:16px">:</span></div>
<div class="a" style="left:51px;top:728px;height:22px;line-height:22px;white-space:nowrap;color:#111"><span style="font-size:19px">命令</span><span style="font-family:'Liberation Mono',monospace;font-size:16.3px;color:#1a1a30">: _TEDIT TEXTEDIT</span></div>
<div class="a" style="left:32px;top:750px;width:1467px;height:24px;background:linear-gradient(#fcfcfc,#f0f0f0 60%,#e2e2e2);border-top:1px solid #8a8a8a"></div>
<div class="a" style="left:45px;top:753px;height:20px;line-height:20px;font-family:'Liberation Mono',monospace;font-size:14.4px;color:#333;white-space:nowrap">3580.3334, 2543.6502, 0.0000</div>
<div class="a" style="left:359px;top:751px;width:50px;height:23px;background:linear-gradient(#d0d0d0,#bdbdbd);border-left:1px solid #888;border-top:1px solid #777"></div>
<div class="a" style="left:360px;top:757px;width:47px;text-align:center;line-height:22px;font-family:'Liberation Mono',monospace;font-size:16px;color:#111;white-space:nowrap;letter-spacing:-1.4px">INFER</div>
<div class="a" style="left:409px;top:751px;width:39px;height:23px;background:linear-gradient(#d0d0d0,#bdbdbd);border-left:1px solid #888;border-top:1px solid #777"></div>
<div class="a" style="left:410px;top:755px;width:38px;text-align:center;line-height:22px;font-size:16px;color:#111;white-space:nowrap;letter-spacing:-0.3px">捕捉</div>
<div class="a" style="left:448px;top:751px;width:38px;height:23px;background:linear-gradient(#d0d0d0,#bdbdbd);border-left:1px solid #888;border-top:1px solid #777"></div>
<div class="a" style="left:449px;top:755px;width:37px;text-align:center;line-height:22px;font-size:16px;color:#111;white-space:nowrap;letter-spacing:-0.3px">栅格</div>
<div class="a" style="left:486px;top:751px;width:40px;height:23px;background:linear-gradient(#d6e6f0,#bcd4e4);border-left:1px solid #888;border-top:1px solid #777"></div>
<div class="a" style="left:487px;top:755px;width:39px;text-align:center;line-height:22px;font-size:16px;color:#111;white-space:nowrap;letter-spacing:-0.3px">正交</div>
<div class="a" style="left:526px;top:751px;width:38px;height:23px;background:linear-gradient(#d0d0d0,#bdbdbd);border-left:1px solid #888;border-top:1px solid #777"></div>
<div class="a" style="left:527px;top:755px;width:37px;text-align:center;line-height:22px;font-size:16px;color:#111;white-space:nowrap;letter-spacing:-0.3px">极轴</div>
<div class="a" style="left:564px;top:751px;width:71px;height:23px;background:linear-gradient(#d6e6f0,#bcd4e4);border-left:1px solid #888;border-top:1px solid #777"></div>
<div class="a" style="left:565px;top:755px;width:70px;text-align:center;line-height:22px;font-size:16px;color:#111;white-space:nowrap;letter-spacing:-0.3px">对象捕捉</div>
<div class="a" style="left:635px;top:751px;width:68px;height:23px;background:linear-gradient(#d0d0d0,#bdbdbd);border-left:1px solid #888;border-top:1px solid #777"></div>
<div class="a" style="left:636px;top:757px;width:65px;text-align:center;line-height:22px;font-family:'Liberation Mono',monospace;font-size:16px;color:#111;white-space:nowrap;letter-spacing:-1.4px">3DOSNAP</div>
<div class="a" style="left:703px;top:751px;width:71px;height:23px;background:linear-gradient(#d0d0d0,#bdbdbd);border-left:1px solid #888;border-top:1px solid #777"></div>
<div class="a" style="left:704px;top:755px;width:70px;text-align:center;line-height:22px;font-size:16px;color:#111;white-space:nowrap;letter-spacing:-0.3px">对象追踪</div>
<div class="a" style="left:774px;top:751px;width:31px;height:23px;background:linear-gradient(#d0d0d0,#bdbdbd);border-left:1px solid #888;border-top:1px solid #777"></div>
<div class="a" style="left:775px;top:757px;width:28px;text-align:center;line-height:22px;font-family:'Liberation Mono',monospace;font-size:16px;color:#111;white-space:nowrap;letter-spacing:-1.4px">DYN</div>
<div class="a" style="left:805px;top:751px;width:40px;height:23px;background:linear-gradient(#d6e6f0,#bcd4e4);border-left:1px solid #888;border-top:1px solid #777"></div>
<div class="a" style="left:806px;top:755px;width:39px;text-align:center;line-height:22px;font-size:16px;color:#111;white-space:nowrap;letter-spacing:-0.3px">线宽</div>
<div class="a" style="left:845px;top:751px;width:1px;height:23px;background:#888"></div>
<div class="a" style="left:1113px;top:751px;width:39px;height:23px;background:linear-gradient(#d0d0d0,#bdbdbd);border-left:1px solid #888;border-top:1px solid #777"></div>
<div class="a" style="left:1116px;top:755px;font-size:16px;line-height:22px;color:#111">模型</div>
<div class="a" style="left:1152px;top:751px;width:25px;height:23px;background:linear-gradient(#d0d0d0,#bdbdbd);border-left:1px solid #888;border-top:1px solid #777"></div>
<div class="a" style="left:1177px;top:751px;width:23px;height:23px;background:linear-gradient(#d0d0d0,#bdbdbd);border-left:1px solid #888;border-top:1px solid #777"></div>
<svg class="a" style="left:1154px;top:753px" width="46" height="20"><rect x="3" y="2" width="15" height="13" fill="#fff" stroke="#333" stroke-width="1.3"/><path d="M6,12 l8,-7 v7z" fill="#ccc" stroke="#333"/><rect x="1" y="16" width="19" height="2" fill="#555"/><rect x="25" y="2" width="8" height="8" fill="#fff" stroke="#333" stroke-width="1.3"/><rect x="34" y="2" width="8" height="8" fill="#fff" stroke="#333" stroke-width="1.3"/><rect x="25" y="13" width="17" height="3" fill="#555"/></svg>
<div class="a" style="left:1200px;top:751px;width:24px;height:23px;background:linear-gradient(#f8f8f8,#e8e8e8);border-left:1px solid #888;border-top:1px solid #777"></div>
<div class="a" style="left:1224px;top:751px;width:65px;height:23px;background:linear-gradient(#d0d0d0,#bdbdbd);border-left:1px solid #888;border-top:1px solid #777"></div>
<div class="a" style="left:1289px;top:751px;width:23px;height:23px;background:linear-gradient(#d0d0d0,#bdbdbd);border-left:1px solid #888;border-top:1px solid #777"></div>
<div class="a" style="left:1312px;top:751px;width:24px;height:23px;background:linear-gradient(#d0d0d0,#bdbdbd);border-left:1px solid #888;border-top:1px solid #777"></div>
<svg class="a" style="left:1226px;top:752px" width="110" height="22"><path d="M10,3 l2,7 l6,7 l-8,-4 l-8,4 l6,-7z" fill="#fff" stroke="#333" stroke-width="1.2"/><text x="21" y="19" font-size="15" fill="#111" font-family="Liberation Mono">1:1</text><polygon points="52,5 60,5 56,10" fill="#111"/><path d="M73,3 l2,7 l6,7 l-8,-4 l-8,4 l6,-7z" fill="#fff" stroke="#333" stroke-width="1.2"/><circle cx="77" cy="13" r="3.5" fill="#f0b030"/><path d="M96,3 l2,7 l6,7 l-8,-4 l-8,4 l6,-7z" fill="#e8e8e8" stroke="#999" stroke-width="1.2"/></svg>
<div class="a" style="left:1336px;top:751px;width:6px;height:23px;background:linear-gradient(#f8f8f8,#e8e8e8);border-left:1px solid #888;border-top:1px solid #777"></div>
<div class="a" style="left:1342px;top:751px;width:24px;height:23px;background:linear-gradient(#d0d0d0,#bdbdbd);border-left:1px solid #888;border-top:1px solid #777"></div>
<div class="a" style="left:1366px;top:751px;width:23px;height:23px;background:linear-gradient(#d0d0d0,#bdbdbd);border-left:1px solid #888;border-top:1px solid #777"></div>
<div class="a" style="left:1389px;top:751px;width:24px;height:23px;background:linear-gradient(#d0d0d0,#bdbdbd);border-left:1px solid #888;border-top:1px solid #777"></div>
<svg class="a" style="left:1344px;top:753px" width="70" height="20"><circle cx="10" cy="10" r="7" fill="#eee" stroke="#333" stroke-width="2.4" stroke-dasharray="3 2"/><circle cx="10" cy="10" r="3" fill="none" stroke="#333" stroke-width="1.5"/><rect x="27" y="9" width="11" height="9" fill="#fff" stroke="#333" stroke-width="1.3"/><path d="M35,9 v-4 a3.5,3.5 0 0 1 7,0 v2" fill="none" stroke="#333" stroke-width="1.5"/><rect x="49" y="5" width="15" height="9" fill="#ddd" stroke="#444" stroke-width="1.2"/><circle cx="61" cy="14" r="4" fill="#9cc8f0" stroke="#555"/></svg>
<div class="a" style="left:1413px;top:751px;width:56px;height:23px;background:linear-gradient(#9a9a9a,#8a8a8a);border-left:1px solid #888;border-top:1px solid #777"></div>
<svg class="a" style="left:1414px;top:753px" width="56" height="20"><rect x="2" y="2" width="52" height="17" fill="#b8b8b8"/><rect x="6" y="5" width="16" height="13" fill="#f0c040" stroke="#555"/><path d="M12,13 l3,3 l6,-7" stroke="#2a9a2a" stroke-width="2.2" fill="none"/><path d="M36,9 a5,5 0 1 1 8,0 l-1,4 h-6z" fill="#f8e090" stroke="#666"/><rect x="38" y="14" width="4" height="4" fill="#999"/></svg>
<div class="a" style="left:1469px;top:751px;width:10px;height:23px;background:linear-gradient(#d0d0d0,#bdbdbd);border-left:1px solid #888;border-top:1px solid #777"></div>
<svg class="a" style="left:1470px;top:759px" width="8" height="6"><polygon points="0,0 8,0 4,5" fill="#111"/></svg>
<div class="a" style="left:1479px;top:751px;width:20px;height:23px;background:linear-gradient(#f4f4f4,#e0e0e0);border-left:1px solid #888;border-top:1px solid #777"></div>
<div class="a" style="left:1483px;top:756px;width:18px;height:14px;border:1.5px solid #333;border-right:none;background:#fff"></div>
<div class="a" style="left:32px;top:774px;width:1467px;height:38px;background:linear-gradient(90deg,#2b6fb0 0%,#3a86c8 20%,#2f7fc8 45%,#2a76c4 60%,#1f5aa8 75%,#16468c 88%,#163f80 100%)"></div>
<div class="a" style="left:32px;top:774px;width:1467px;height:2px;background:rgba(200,225,250,.5)"></div>
<svg class="a" style="left:900px;top:774px" width="220" height="38"><defs><filter id="bl"><feGaussianBlur stdDeviation="1.6"/></filter></defs><path d="M60,0 Q120,8 170,40" stroke="rgba(190,225,255,.6)" stroke-width="7" fill="none" filter="url(#bl)"/></svg>
<div class="a" style="left:1470px;top:776px;width:29px;height:36px;background:linear-gradient(90deg,#23508a,#3a6aa8);border-left:1px solid #5a88c0"></div>
<div class="a" style="left:184px;top:776px;width:73px;height:36px;background:linear-gradient(#e0f0fc,#b0d8f4 45%,#78b8ec);border:1px solid #a8d4f4;border-radius:3px"></div>
<div class="a" style="left:412px;top:776px;width:69px;height:36px;background:linear-gradient(#e0f0fc,#b0d8f4 45%,#78b8ec);border:1px solid #a8d4f4;border-radius:3px"></div>
<div class="a" style="left:487px;top:776px;width:72px;height:36px;background:linear-gradient(#e0f0fc,#b0d8f4 45%,#78b8ec);border:1px solid #a8d4f4;border-radius:3px"></div>
<div class="a" style="left:563px;top:776px;width:72px;height:36px;background:linear-gradient(#e0f0fc,#b0d8f4 45%,#78b8ec);border:1px solid #a8d4f4;border-radius:3px"></div>
<div class="a" style="left:44px;top:777px;width:46px;height:46px;border-radius:50%;background:radial-gradient(circle at 50% 40%,#7aa8d8,#2a5a98 70%,#1a3a70);border:1px solid #9ac0e8"></div>
<svg class="a" style="left:52px;top:784px" width="30" height="28"><path d="M3,6 q5,-3 11,0 v10 q-6,-3 -11,0z" fill="#f05a20"/><path d="M16,6 q5,3 11,0 v10 q-5,3 -11,0z" fill="#7ac030"/><path d="M3,18 q5,-3 11,0 v10 q-6,-3 -11,0z" fill="#2a9ae8"/><path d="M16,18 q5,3 11,0 v10 q-5,3 -11,0z" fill="#f8c020"/></svg>
<svg class="a" style="left:124px;top:778px" width="44" height="34"><circle cx="22" cy="22" r="14" fill="none" stroke="#3ab0f0" stroke-width="7"/><rect x="12" y="19" width="22" height="5" fill="#3ab0f0"/><path d="M6,30 Q10,5 38,4" stroke="#f0c020" stroke-width="4" fill="none"/></svg>
<svg class="a" style="left:198px;top:780px" width="46" height="32"><path d="M2,4 h12 l3,3 h27 v25 h-42z" fill="#e8c860"/><rect x="6" y="6" width="34" height="8" fill="#fff"/><path d="M1,11 h44 v21 h-44z" fill="#f8e08a"/><rect x="10" y="7" width="3" height="4" fill="#3a8a3a"/><rect x="20" y="8" width="3" height="4" fill="#e04020"/><rect x="30" y="9" width="3" height="4" fill="#2a70c0"/></svg>
<svg class="a" style="left:274px;top:779px" width="44" height="33"><rect x="1" y="1" width="42" height="34" rx="4" fill="#18a818"/><path d="M7,33 V8 q15,-4 30,0 V33" fill="none" stroke="#e8ffe8" stroke-width="2.5"/><path d="M18,14 q-4,8 0,16 M22,16 q-3,6 0,12 M26,18 q-2,4 0,8" fill="none" stroke="#e8ffe8" stroke-width="2.2"/><circle cx="30" cy="22" r="3" fill="#e8ffe8"/></svg>
<svg class="a" style="left:346px;top:780px" width="50" height="32"><path d="M5,6 Q25,-2 45,18 Q25,36 5,30z" fill="#30b0e8"/><path d="M8,10 Q26,6 40,18 Q26,30 8,28z" fill="#f0a020"/><path d="M14,12 L34,20 L14,28z" fill="#fff"/></svg>
<svg class="a" style="left:424px;top:779px" width="46" height="33"><rect x="1" y="1" width="44" height="34" fill="#e03a28"/><path d="M34,4 l3,7 l7,0 l-6,4 l2,7 l-6,-4 l-6,4 l2,-7 l-6,-4 l7,0z" fill="#fff"/><path d="M4,33 Q14,14 30,14 M10,33 Q18,20 30,18 M16,33 Q22,24 30,22" stroke="#fff" stroke-width="2" fill="none"/></svg>
<svg class="a" style="left:500px;top:781px" width="46" height="31"><path d="M2,2 h14 l4,4 h24 v26 h-42z" fill="#5aa8e8"/><rect x="24" y="2" width="8" height="30" fill="#c88a30"/><rect x="26" y="6" width="3" height="3" fill="#fff"/><rect x="26" y="14" width="3" height="3" fill="#fff"/><text x="5" y="20" font-size="7" fill="#fff" font-family="Liberation Sans">360</text></svg>
<svg class="a" style="left:576px;top:779px" width="48" height="33"><rect x="18" y="10" width="28" height="20" fill="#555"/><path d="M4,32 L18,2 H26 L38,30 H30 L26,22 H16 L12,32z" fill="#e83020"/><path d="M18,17 L21,8 L24,17z" fill="#8a1a10"/></svg>
<div class="a" style="left:32px;top:804px;width:1467px;height:8px;background:#4a94e4"></div>
<svg class="a" style="left:1148px;top:783px" width="240" height="29">
<rect x="3" y="13" width="22" height="12" rx="2" fill="#e8eef4" stroke="#8a9ab0"/><path d="M6,17 h16 M6,20 h16" stroke="#8a9ab0"/><path d="M10,12 q4,-6 12,-8" stroke="#c0d0e0" stroke-width="1.5" fill="none"/>
<rect x="49" y="3" width="13" height="8" fill="#e0e0e0"/><rect x="49" y="11" width="13" height="16" fill="#3ab03a"/>
<polygon points="85,19 95,19 90,14" fill="#fff"/>
<rect x="114" y="6" width="12" height="20" rx="2" fill="none" stroke="#e8f0f8" stroke-width="2"/><rect x="116" y="12" width="8" height="12" fill="#e8f0f8"/><path d="M128,14 h6 v5 h-6z M130,10 v4 M133,10 v4" stroke="#fff" stroke-width="1.5" fill="#fff"/>
<rect x="148" y="5" width="1.5" height="22" fill="#dde"/><path d="M150,6 h10 l-2,4 l6,2 v8 l-6,-2 h-8z" fill="#fff"/>
<path d="M182,24 l3,-3 v3z M186,24 v-5 M190,24 v-8 M194,24 v-11 M198,24 v-14" stroke="#e8f0f8" stroke-width="2.5"/>
<path d="M212,12 h4 l6,-6 v18 l-6,-6 h-4z" fill="#e8f0f8"/><path d="M226,10 q3,5 0,10 M230,8 q4,7 0,14" stroke="#c8d8e8" stroke-width="1.5" fill="none"/>
</svg>
<div class="a" style="left:1416px;top:778px;font-size:17px;line-height:24px;color:#fff;white-space:nowrap">10:23</div>
<div class="a" style="left:1402px;top:800px;font-size:15px;line-height:20px;color:rgba(230,240,250,.55);white-space:nowrap">2022/2/17</div>
</body></html>
